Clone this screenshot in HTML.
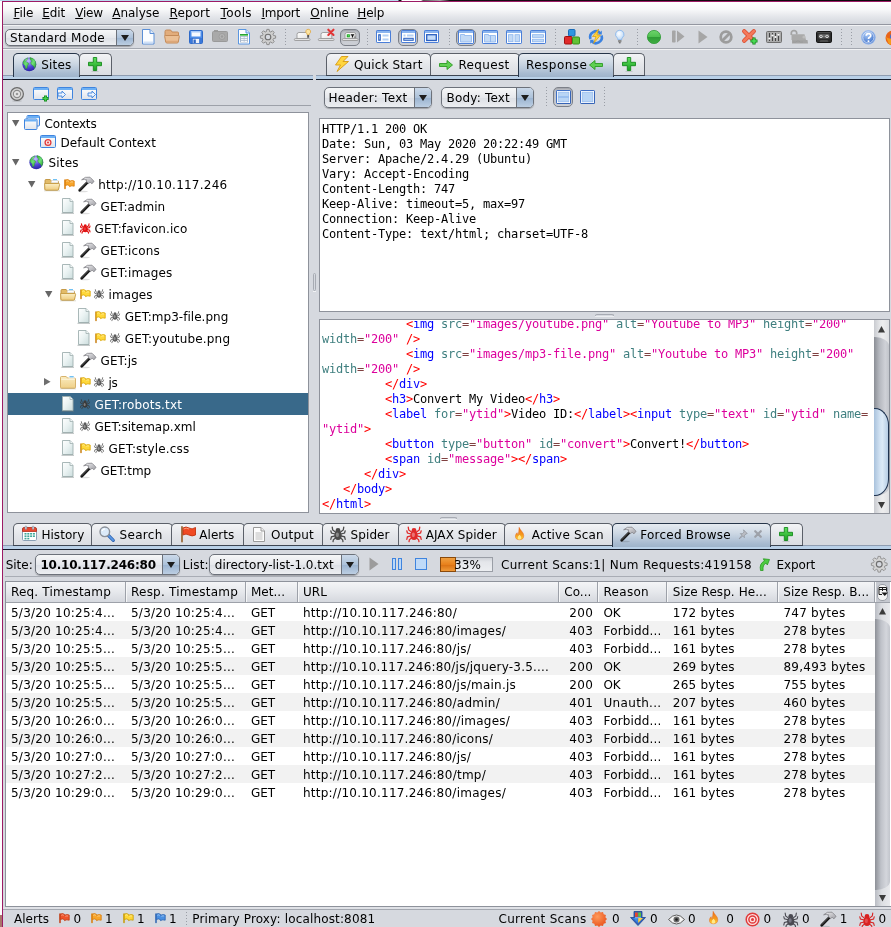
<!DOCTYPE html><html><head><meta charset="utf-8"><title>OWASP ZAP</title><style>html,body{margin:0;padding:0;}
body{width:891px;height:927px;overflow:hidden;background:#d6d9df;font-family:"DejaVu Sans","Liberation Sans",sans-serif;font-size:12px;color:#000;position:relative;}
.a{position:absolute;}
.t{position:absolute;white-space:pre;line-height:16px;height:16px;}
.mono{font-family:"DejaVu Sans Mono","Liberation Mono",monospace;font-size:12px;letter-spacing:-0.225px;white-space:pre;line-height:15px;}
svg{position:absolute;overflow:visible;}
.tab{position:absolute;box-sizing:border-box;border:1px solid #5b6069;border-bottom:none;border-radius:5px 5px 0 0;background:linear-gradient(#f3f4f6,#e4e6ea 50%,#d9dce2);height:23px;top:53px}
.tab:not(.sel):after{content:"";position:absolute;left:-1px;right:-1px;bottom:0;height:1px;background:#3d4552}
.tab.sel{border-color:#27364a;background:linear-gradient(#e6ebf1,#cdd8e4 40%,#a8bbd1 85%,#9fb4cb);height:24px}
.strip{position:absolute;height:5px;background:linear-gradient(#8f9db1 0 1px,#b9d0e7 1px 4px,#141c2b 4px 5px);}
.combo{position:absolute;box-sizing:border-box;border:1px solid #6c717a;border-radius:5px;background:linear-gradient(#f6f7f8,#e6e8ec 50%,#dcdfe5 51%,#eceef1);box-shadow:0 1px 1px rgba(0,0,0,.25);}
.combo .arr{position:absolute;right:0;top:0;bottom:0;width:16px;border-left:1px solid #6c717a;border-radius:0 4px 4px 0;background:linear-gradient(#cbd9e9,#adc2da 50%,#9ab3d0 51%,#bccee2);}
.combo .arr:after{content:"";position:absolute;left:4px;top:calc(50% - 3px);border:4px solid transparent;border-top:6px solid #1d1d1d;border-bottom:none;}
.sepv{position:absolute;width:1px;background:repeating-linear-gradient(#9a9ea6 0 1px,transparent 1px 3px);}
.tb{position:absolute;box-sizing:border-box;border:1px solid #7c8089;border-radius:5px;background:linear-gradient(#bfc2c9,#cdd0d6);box-shadow:inset 0 1px 2px rgba(0,0,0,.18)}
.panel{position:absolute;box-sizing:border-box;border:1px solid #8e929b;background:#fff;}
.mono i{font-style:normal}
.mono .r{color:#ff0000}.mono .b{color:#0000ff}.mono .at{color:#3f7f7f}.mono .op{color:#804040}.mono .s{color:#dc009c}
#w{position:absolute;left:0;top:0;width:891px;height:927px;will-change:transform;}
</style></head><body><div id="w">
<div class="a" style="left:0;top:0;width:2px;height:927px;background:#fff"></div>
<div class="a" style="left:0;top:915px;width:2px;height:12px;background:#a9756b"></div>
<div class="a" style="left:2px;top:0;width:1px;height:927px;background:#9c1b65"></div>
<div class="a" style="left:0;top:0;width:891px;height:1px;background:linear-gradient(90deg,#b9d9ee 0,#b9d9ee 398px,#111 399px,#111 401px,#fff 402px,#fff 421px,#555 423px,#aaa 440px,#111 450px,#1a0a14 60%,#0a0a0a)"></div>
<div class="a" style="left:2px;top:1px;width:889px;height:1px;background:#9c1b65"></div>
<div class="a" style="left:3px;top:2px;width:888px;height:22px;background:linear-gradient(#ffffff 0,#f7f8f9 35%,#e5e7eb 65%,#d8dbe1 90%,#d4d7dd)"></div>
<div class="a" style="left:3px;top:24px;width:888px;height:1px;background:#9396a0"></div>
<div class="t" style="left:13.5px;top:5px;letter-spacing:-0.095px;"><u>F</u>ile</div>
<div class="t" style="left:42.2px;top:5px;letter-spacing:-0.110px;"><u>E</u>dit</div>
<div class="t" style="left:75.2px;top:5px;letter-spacing:-0.219px;"><u>V</u>iew</div>
<div class="t" style="left:112.2px;top:5px;letter-spacing:-0.006px;"><u>A</u>nalyse</div>
<div class="t" style="left:169.5px;top:5px;letter-spacing:0.120px;"><u>R</u>eport</div>
<div class="t" style="left:220.5px;top:5px;letter-spacing:0.388px;"><u>T</u>ools</div>
<div class="t" style="left:261.5px;top:5px;letter-spacing:-0.221px;"><u>I</u>mport</div>
<div class="t" style="left:310.3px;top:5px;letter-spacing:-0.035px;"><u>O</u>nline</div>
<div class="t" style="left:357.3px;top:5px;letter-spacing:-0.089px;"><u>H</u>elp</div>
<div class="a" style="left:3px;top:48px;width:888px;height:1px;background:#a4a8b0"></div>
<div class="a" style="left:3px;top:49px;width:888px;height:1px;background:#f1f2f4"></div>
<div class="a" style="left:3px;top:25px;width:888px;height:1px;background:#f1f2f4"></div>
<div class="combo" style="left:5px;top:29px;width:129px;height:17px"><div class="arr"></div></div>
<div class="t" style="left:10px;top:30px;letter-spacing:0.300px;">Standard Mode</div>
<svg style="left:142px;top:29px" width="13" height="16" viewBox="0 0 13 16"><path d="M.5 .5h7.500l4 4v10.500h-11.500z" fill="#fbfdff" stroke="#5b8fd6" stroke-width="1"/><path d="M8 .5v4h4" fill="#dfeafa" stroke="#5b8fd6" stroke-width="1"/><path d="M1.500 13.500h9.500" stroke="#cfe0f7" stroke-width="2"/></svg>
<svg style="left:164px;top:29px" width="16" height="15" viewBox="0 0 16 15"><path d="M1 2.500q0-1.500 1.500-1.500h3.500q1 0 1.500 1l.5 1h5.500q1 0 1 1v3h-13.500z" fill="#e2ad7c" stroke="#c48a58" stroke-width="1"/>
<path d="M.700 7.500q-.3-1 .8-1h13q1.100 0 .8 1l-1 5.500q-.2 1-1.300 1h-10q-1.100 0-1.300-1z" fill="#ebbf94" stroke="#c48a58" stroke-width="1"/><path d="M2 12.300h12" stroke="#d9a272" stroke-width="1"/></svg>
<svg style="left:189px;top:30px" width="14" height="14" viewBox="0 0 14 14"><path d="M.5 1.500q0-1 1-1h11q1 0 1 1v11q0 1-1 1h-11q-1 0-1-1z" fill="#4d8ce8" stroke="#2f6ac8" stroke-width="1"/>
<rect x="2.500" y="1" width="9" height="5.500" fill="#f6f9ff"/><rect x="2.500" y="1" width="9" height="1.500" fill="#a9c9f7"/><path d="M1 8h12v5h-12z" fill="#3a78da"/>
<rect x="3.500" y="8.500" width="7" height="5" fill="#eef2fa" stroke="#2f6ac8" stroke-width=".6"/><rect x="4.500" y="9.500" width="2.300" height="3.500" fill="#2f66c4"/></svg>
<svg style="left:212px;top:30px" width="16" height="12" viewBox="0 0 16 12"><rect x="2" y="0" width="4" height="2" fill="#9d9d9d"/><rect x=".5" y="1.500" width="15" height="10" rx="1" fill="#a9a9a9" stroke="#9a9a9a"/>
<circle cx="10" cy="6.500" r="3" fill="#b5b5b5" stroke="#999" stroke-width=".8"/><circle cx="10" cy="6.500" r="1.200" fill="#9c9c9c"/></svg>
<svg style="left:238px;top:29px" width="12" height="16" viewBox="0 0 12 16"><path d="M.5 .5h7.500l3.500 3.500v11h-11z" fill="#fdfeff" stroke="#5b96e0" stroke-width="1"/><path d="M8 .5v3.500h3.500" fill="#dfeafa" stroke="#5b96e0" stroke-width="1"/>
<rect x="2" y="5" width="8" height="8.500" fill="#a9b9cd"/><rect x="2" y="5" width="8" height="1" fill="#2aa336"/><rect x="2" y="6" width="8" height="1" fill="#6fd26f"/>
<g fill="#fff"><rect x="3" y="7.800" width="2.800" height="1.100"/><rect x="6.400" y="7.800" width="2.800" height="1.100"/><rect x="3" y="9.800" width="2.800" height="1.100"/><rect x="6.400" y="9.800" width="2.800" height="1.100"/><rect x="3" y="11.800" width="2.800" height="1.100"/><rect x="6.400" y="11.800" width="2.800" height="1.100"/></g></svg>
<svg style="left:260px;top:29px" width="16" height="16" viewBox="0 0 16 16"><path d="M15.61 6.85L15.61 9.15L13.49 9.52L12.96 10.81L14.20 12.57L12.57 14.20L10.81 12.96L9.52 13.49L9.15 15.61L6.85 15.61L6.48 13.49L5.19 12.96L3.43 14.20L1.80 12.57L3.04 10.81L2.51 9.52L0.39 9.15L0.39 6.85L2.51 6.48L3.04 5.19L1.80 3.43L3.43 1.80L5.19 3.04L6.48 2.51L6.85 0.39L9.15 0.39L9.52 2.51L10.81 3.04L12.57 1.80L14.20 3.43L12.96 5.19L13.49 6.48z" fill="#cfcfcf" stroke="#868686" stroke-width=".9" stroke-linejoin="round"/><circle cx="8" cy="8" r="2.800" fill="#d6d9df" stroke="#6f6f6f" stroke-width="1.100"/></svg>
<div class="sepv" style="left:285px;top:29px;height:17px"></div>
<div class="sepv" style="left:367px;top:29px;height:17px"></div>
<div class="sepv" style="left:449px;top:29px;height:17px"></div>
<div class="sepv" style="left:555px;top:29px;height:17px"></div>
<div class="sepv" style="left:637px;top:29px;height:17px"></div>
<div class="sepv" style="left:841px;top:29px;height:17px"></div>
<div class="sepv" style="left:851px;top:29px;height:17px"></div>
<svg style="left:293.5px;top:29px" width="17" height="14" viewBox="0 0 17 14"><defs><linearGradient id="lp" x1="0" y1="0" x2="1" y2="1"><stop offset="0" stop-color="#ffffff"/><stop offset="1" stop-color="#e2e2e2"/></linearGradient></defs><path d="M3 9.700v-4.200q0-2 2-2h6.800q2 0 2 2v4.200z" fill="url(#lp)" stroke="#8e8e8e" stroke-width=".8"/><rect x=".4" y="9.700" width="15.600" height="1.800" rx=".7" fill="#f2f2f2" stroke="#8e8e8e" stroke-width=".8"/><path d="M14.200 0.300a2.300 2.300 0 0 1 1.400 4.200q-.5 .5-.5 1.500h-1.800q0-1-.5-1.500a2.300 2.300 0 0 1 1.400-4.200z" fill="#fbe3a0" stroke="#e0a030" stroke-width=".7"/><rect x="13.300" y="6" width="1.800" height="2.600" fill="#555"/></svg>
<svg style="left:317.5px;top:29px" width="17" height="14" viewBox="0 0 17 14"><defs><linearGradient id="lp" x1="0" y1="0" x2="1" y2="1"><stop offset="0" stop-color="#ffffff"/><stop offset="1" stop-color="#e2e2e2"/></linearGradient></defs><path d="M3 9.700v-4.200q0-2 2-2h6.800q2 0 2 2v4.200z" fill="url(#lp)" stroke="#8e8e8e" stroke-width=".8"/><rect x=".4" y="9.700" width="15.600" height="1.800" rx=".7" fill="#f2f2f2" stroke="#8e8e8e" stroke-width=".8"/><path d="M10.300 .7l5.200 5.200M15.500 .7l-5.200 5.200" stroke="#e23535" stroke-width="2.100" stroke-linecap="round"/></svg>
<div class="tb" style="left:340px;top:29px;width:20px;height:17px"></div>
<svg style="left:341.7px;top:29.2px" width="17" height="14" viewBox="0 0 17 14"><defs><linearGradient id="lp" x1="0" y1="0" x2="1" y2="1"><stop offset="0" stop-color="#ffffff"/><stop offset="1" stop-color="#e2e2e2"/></linearGradient></defs><path d="M3 9.700v-4.200q0-2 2-2h6.800q2 0 2 2v4.200z" fill="url(#lp)" stroke="#8e8e8e" stroke-width=".8"/><rect x=".4" y="9.700" width="15.600" height="1.800" rx=".7" fill="#f2f2f2" stroke="#8e8e8e" stroke-width=".8"/><rect x="4.800" y="5.300" width="3" height="3" fill="#17a81f"/><rect x="5.700" y="6.200" width="1.200" height="1.200" fill="#7be07b"/><path d="M8.800 5.800h3.400M10.500 5.800v2.800" stroke="#111" stroke-width="1.200"/><rect x="12.400" y="7.600" width="1" height="1" fill="#111"/></svg>
<svg style="left:376px;top:30px" width="15" height="13" viewBox="0 0 15 13"><rect x=".5" y=".5" width="14" height="12" rx=".6" fill="#ffffff" stroke="#4a7ed8" stroke-width="1"/><rect x="1" y="1" width="13" height="2" fill="#8ab4ee"/><rect x="2.700" y="4.700" width="1.600" height="5.600" fill="#c3daf6" stroke="#2a5fc0" stroke-width="1"/><rect x="6.500" y="4.500" width="6" height="2" fill="#b4d0f4"/><rect x="6.500" y="8.500" width="6" height="2" fill="#b4d0f4"/></svg>
<div class="tb" style="left:398px;top:29px;width:20px;height:17px"></div>
<svg style="left:400.5px;top:30px" width="15" height="13" viewBox="0 0 15 13"><rect x=".5" y=".5" width="14" height="12" rx=".6" fill="#ffffff" stroke="#4a7ed8" stroke-width="1"/><rect x="1" y="1" width="13" height="2" fill="#8ab4ee"/><rect x="2.500" y="4.500" width="2" height="2" fill="#b4d0f4"/><rect x="6" y="4.500" width="6.500" height="2" fill="#b4d0f4"/><rect x="2.800" y="8.300" width="9.400" height="2" fill="#c3daf6" stroke="#2a5fc0" stroke-width="1"/></svg>
<svg style="left:424px;top:30px" width="15" height="13" viewBox="0 0 15 13"><rect x=".5" y=".5" width="14" height="12" rx=".6" fill="#ffffff" stroke="#4a7ed8" stroke-width="1"/><rect x="1" y="1" width="13" height="2" fill="#8ab4ee"/><rect x="2.700" y="4.700" width="9.600" height="5.800" fill="#c5dcf8" stroke="#2a5fc0" stroke-width="1.300"/></svg>
<div class="tb" style="left:456px;top:29px;width:20px;height:17px"></div>
<svg style="left:458px;top:30px" width="16" height="14" viewBox="0 0 16 14"><rect x=".5" y=".5" width="15" height="13" rx=".6" fill="#ffffff" stroke="#4a7ed8" stroke-width="1"/><rect x="1" y="1" width="14" height="2" fill="#8ab4ee"/><path d="M2.500 12v-7.500h4v1h7v6.500z" fill="#c3daf6" stroke="#8ab4ee" stroke-width=".8"/></svg>
<svg style="left:482px;top:30px" width="16" height="14" viewBox="0 0 16 14"><rect x=".5" y=".5" width="15" height="13" rx=".6" fill="#ffffff" stroke="#4a7ed8" stroke-width="1"/><rect x="1" y="1" width="14" height="2" fill="#8ab4ee"/><path d="M2.500 12v-7.500h4v1h7v6.500z" fill="#c3daf6" stroke="#8ab4ee" stroke-width=".8"/><path d="M8.500 5.500v6.500" stroke="#8ab4ee" stroke-width=".9"/></svg>
<svg style="left:506px;top:30px" width="16" height="14" viewBox="0 0 16 14"><rect x=".5" y=".5" width="15" height="13" rx=".6" fill="#ffffff" stroke="#4a7ed8" stroke-width="1"/><rect x="1" y="1" width="14" height="2" fill="#8ab4ee"/><rect x="2.500" y="4.700" width="4.500" height="7" fill="#c3daf6" stroke="#8ab4ee" stroke-width=".8"/><rect x="9" y="4.700" width="4.500" height="7" fill="#c3daf6" stroke="#8ab4ee" stroke-width=".8"/></svg>
<svg style="left:530px;top:30px" width="16" height="14" viewBox="0 0 16 14"><rect x=".5" y=".5" width="15" height="13" rx=".6" fill="#ffffff" stroke="#4a7ed8" stroke-width="1"/><rect x="1" y="1" width="14" height="2" fill="#8ab4ee"/><rect x="2.500" y="4.700" width="11" height="2.600" fill="#c3daf6" stroke="#8ab4ee" stroke-width=".8"/><rect x="2.500" y="9.200" width="11" height="2.600" fill="#c3daf6" stroke="#8ab4ee" stroke-width=".8"/></svg>
<svg style="left:563.5px;top:28.7px" width="16" height="16" viewBox="0 0 16 16"><rect x="4.500" y=".5" width="6.500" height="6.500" rx="1" fill="#2f96e0" stroke="#1a6cb8"/><rect x=".5" y="7.500" width="7.500" height="7.500" rx="1" fill="#e02a2a" stroke="#a01010"/><rect x="8.500" y="8" width="7" height="7" rx="1" fill="#62c234" stroke="#3c8f1a"/></svg>
<svg style="left:588px;top:29px" width="16" height="16" viewBox="0 0 16 16"><path d="M2.500 10a5.800 5.800 0 0 1 10-5.500M13.500 6.500a5.800 5.800 0 0 1-10 5.500" fill="none" stroke="#3b82e0" stroke-width="2.600"/><path d="M13.800 1.500v4h-4zM2.200 14.800v-4h4z" fill="#3b82e0"/><path d="M10.500 0l-6 7.500h3.500l-2.500 7 7-8.500h-3.500z" fill="#ffd23c" stroke="#d49b10" stroke-width=".7" stroke-linejoin="round"/></svg>
<svg style="left:615.2px;top:29px" width="9.5" height="15.5" viewBox="0 0 11 16"><defs><radialGradient id="bg1" cx=".4" cy=".35" r=".7"><stop offset="0" stop-color="#fff"/><stop offset="1" stop-color="#b7d6f7"/></radialGradient></defs><path d="M5.500 .5a4.800 4.800 0 0 1 3 8.600q-.8 .8-.8 2.400h-4.400q0-1.600-.8-2.400a4.800 4.800 0 0 1 3-8.600z" fill="url(#bg1)" stroke="#7fb0ea" stroke-width=".9"/><rect x="3.500" y="11.800" width="4" height="2.600" rx=".6" fill="#8d8d8d"/><rect x="4.500" y="14.400" width="2" height="1.200" fill="#555"/></svg>
<svg style="left:647px;top:30px" width="14" height="14" viewBox="0 0 14 14"><defs><linearGradient id="grn" x1="0" y1="0" x2="0" y2="1"><stop offset="0" stop-color="#6fd46c"/><stop offset=".5" stop-color="#4fc050"/><stop offset=".52" stop-color="#2f9c36"/><stop offset="1" stop-color="#3fae44"/></linearGradient></defs><circle cx="7" cy="7" r="6.600" fill="url(#grn)" stroke="#2f9a35" stroke-width=".8"/></svg>
<svg style="left:672px;top:30.3px" width="13" height="13" viewBox="0 0 13 13"><rect x="0" y=".5" width="3.600" height="12" rx=".8" fill="#a6a6a6"/><path d="M5 0.500v12l7.500-6z" fill="#a6a6a6"/></svg>
<svg style="left:697.5px;top:29.7px" width="10" height="14" viewBox="0 0 10 14"><path d="M.5 .5v13l9-6.500z" fill="#a6a6a6"/></svg>
<svg style="left:719px;top:29.8px" width="14" height="14" viewBox="0 0 14 14"><circle cx="7" cy="7" r="5.300" fill="none" stroke="#9c9c9c" stroke-width="2.800"/><path d="M3.300 10.700l7.400-7.400" stroke="#9c9c9c" stroke-width="2.800"/></svg>
<svg style="left:742px;top:29.3px" width="17" height="16" viewBox="0 0 17 16"><path d="M2.200 2.200l9.600 9.600M11.800 2.200l-9.600 9.600" stroke="#d9482a" stroke-width="4.200" stroke-linecap="round"/><path d="M2.200 2.200l9.600 9.600M11.800 2.200l-9.600 9.600" stroke="#f4785a" stroke-width="2.800" stroke-linecap="round"/><path d="M12 8.500v7M8.500 12h7" stroke="#0f8a1a" stroke-width="3.200"/><path d="M12 9.300v5.400M9.300 12h5.400" stroke="#4fe05a" stroke-width="1.500"/></svg>
<svg style="left:766px;top:30.8px" width="16" height="12" viewBox="0 0 16 12"><rect x=".5" y=".5" width="15" height="11" rx="1" fill="#ababab" stroke="#6e6e6e"/><path d="M3.500 2v8M6.500 2v8M9.500 2v8M12.500 2v8" stroke="#454545" stroke-width="1"/><circle cx="3.500" cy="7.500" r="1.100" fill="#fff"/><circle cx="6.500" cy="4.500" r="1.100" fill="#fff"/><circle cx="9.500" cy="6" r="1.100" fill="#fff"/><circle cx="12.500" cy="3.700" r="1.100" fill="#fff"/></svg>
<svg style="left:790px;top:29.8px" width="18" height="14" viewBox="0 0 18 14"><path d="M1.300 5v-2q0-2.300 2.700-2.300t2.700 2.300v1.500" fill="none" stroke="#a3a3a3" stroke-width="1.700"/><path d="M1.500 4.200h13l1.500 5.800h-14.500z" fill="#aaaaaa"/><path d="M2 10h15.500l.5 3.500h-16z" fill="#a4a4a4"/><circle cx="14" cy="7" r="1.600" fill="#bdbdbd"/><path d="M3 12h3l1-1h2l1 1h3" stroke="#999" stroke-width=".8" fill="none"/></svg>
<svg style="left:816px;top:31px" width="16" height="12" viewBox="0 0 16 12"><rect x=".5" y=".5" width="15" height="11" rx="1.200" fill="#2c2c2c" stroke="#151515"/><rect x="1.500" y="1.200" width="13" height="1" fill="#555"/><rect x="2.500" y="3" width="11" height="4.600" rx="1" fill="#5c5c5c"/><circle cx="5" cy="5.300" r="1.600" fill="#f2f2f2"/><circle cx="11" cy="5.300" r="1.600" fill="#f2f2f2"/><circle cx="5" cy="5.300" r=".7" fill="#111"/><circle cx="11" cy="5.300" r=".7" fill="#111"/><rect x="6.800" y="4.600" width="2.400" height="1.400" fill="#777"/><path d="M3.500 11l1-2h7l1 2z" fill="#4c4c4c"/></svg>
<svg style="left:860.6px;top:29.7px" width="14.8" height="14.8" viewBox="0 0 15 15"><defs><radialGradient id="hg" cx=".4" cy=".3" r=".8"><stop offset="0" stop-color="#a9c8f5"/><stop offset="1" stop-color="#2a62c4"/></radialGradient></defs><circle cx="7.500" cy="7.500" r="7" fill="url(#hg)" stroke="#9dbdf0" stroke-width=".8"/><circle cx="7.500" cy="7.500" r="5.700" fill="none" stroke="#fff" stroke-width=".8" opacity=".85"/><path d="M5.300 5.800q0-2.200 2.300-2.200t2.300 2q0 1.200-1.200 1.800t-1.100 1.700" fill="none" stroke="#fff" stroke-width="1.700"/><circle cx="7.600" cy="11.400" r="1" fill="#fff"/></svg>
<svg style="left:884.5px;top:29.5px" width="16" height="16" viewBox="0 0 16 16"><circle cx="8" cy="8" r="7.500" fill="#e8641a"/><circle cx="9" cy="7" r="4" fill="#3d6fd0"/><path d="M.8 6q2 3 4 2.500t3 3.500-4 2z" fill="#f59a1c"/></svg>
<div class="strip" style="left:3px;top:75px;width:310px"></div>
<div class="tab sel" style="left:13px;width:67px"></div>
<svg style="left:21.6px;top:56.5px" width="14.6" height="14.6" viewBox="0 0 15 15"><defs><radialGradient id="gg" cx=".45" cy=".28" r=".75"><stop offset="0" stop-color="#b9b2ff"/><stop offset=".55" stop-color="#5148d6"/><stop offset="1" stop-color="#2a22a2"/></radialGradient>
<linearGradient id="gl" x1="0" y1="0" x2="1" y2="1"><stop offset="0" stop-color="#2fae2a"/><stop offset=".5" stop-color="#6fe07a"/><stop offset="1" stop-color="#2aa228"/></linearGradient></defs>
<circle cx="7.500" cy="7.500" r="7.100" fill="url(#gg)"/>
<path d="M1.100 5q1.300-3 4.900-4.300l-.4 1.800-2 2 1.600 .8 2 1.600-1.400 1.600-.6 3-1.500 .6-.5-3-1.400-1.400q-1-1.200-.7-2.700z" fill="url(#gl)" stroke="#23901f" stroke-width=".35"/>
<path d="M8.200 .5q4 .4 5.700 4.200 1.200 3.600-.8 6.900l-1.100-2.100-2-1.500-1.200-2 1.300-1.600-1.600-1.500z" fill="url(#gl)" stroke="#23901f" stroke-width=".35"/>
<ellipse cx="6" cy="3.300" rx="3" ry="1.700" fill="#fff" opacity=".18"/></svg>
<div class="t" style="left:41.2px;top:57px;letter-spacing:0.202px;">Sites</div>
<div class="tab" style="left:79px;width:33px"></div>
<svg style="left:88px;top:57px" width="14" height="14" viewBox="0 0 14 14"><defs><linearGradient id="pg" x1="0" y1="0" x2="0" y2="1"><stop offset="0" stop-color="#63e060"/><stop offset="1" stop-color="#17a01f"/></linearGradient></defs>
<path d="M5.300 .5h3.400v4.800h4.800v3.400h-4.800v4.800h-3.400v-4.800h-4.800v-3.400h4.800z" fill="url(#pg)" stroke="#158a1c" stroke-width=".9" stroke-linejoin="round"/><ellipse cx="7" cy="14.300" rx="4" ry=".6" fill="#000" opacity=".15"/></svg>
<svg style="left:10px;top:87px" width="14" height="14" viewBox="0 0 14 14"><circle cx="7" cy="7" r="6.400" fill="#d4d4d4" stroke="#6a6a6a" stroke-width="1.200"/><circle cx="7" cy="7" r="3.600" fill="#e6e6e6" stroke="#8a8a8a" stroke-width="1.100"/><circle cx="7" cy="7" r="1.300" fill="#9a9a9a"/><ellipse cx="7" cy="14" rx="5" ry=".7" fill="#000" opacity=".15"/></svg>
<svg style="left:33px;top:87px" width="17" height="15" viewBox="0 0 17 15"><defs><linearGradient id="wb" x1="0" y1="0" x2="0" y2="1"><stop offset="0" stop-color="#fff"/><stop offset="1" stop-color="#dfe3ea"/></linearGradient></defs><rect x=".5" y=".5" width="15" height="12" rx="1" fill="url(#wb)" stroke="#3f84de" stroke-width="1"/><rect x="1" y="1" width="14" height="2" fill="#6cb0f5"/><path d="M12.500 8.500v6M9.500 11.500h6" stroke="#128a1c" stroke-width="3"/><path d="M12.500 9.300v4.400M10.300 11.500h4.400" stroke="#44d050" stroke-width="1.400"/></svg>
<svg style="left:57px;top:87px" width="16" height="13" viewBox="0 0 16 13"><defs><linearGradient id="wb" x1="0" y1="0" x2="0" y2="1"><stop offset="0" stop-color="#fff"/><stop offset="1" stop-color="#dfe3ea"/></linearGradient></defs><rect x=".5" y=".5" width="15" height="12" rx="1" fill="url(#wb)" stroke="#3f84de" stroke-width="1"/><rect x="1" y="1" width="14" height="2" fill="#6cb0f5"/><path d="M1 6h4v-2l3.500 3.500-3.500 3.500v-2h-4z" fill="#eaf2fd" stroke="#3f84de" stroke-width=".9" stroke-linejoin="round"/></svg>
<svg style="left:81px;top:87px" width="16" height="13" viewBox="0 0 16 13"><defs><linearGradient id="wb" x1="0" y1="0" x2="0" y2="1"><stop offset="0" stop-color="#fff"/><stop offset="1" stop-color="#dfe3ea"/></linearGradient></defs><rect x=".5" y=".5" width="15" height="12" rx="1" fill="url(#wb)" stroke="#3f84de" stroke-width="1"/><rect x="1" y="1" width="14" height="2" fill="#6cb0f5"/><path d="M7 6h4v-2l3.500 3.500-3.500 3.500v-2h-4z" fill="#eaf2fd" stroke="#3f84de" stroke-width=".9" stroke-linejoin="round"/></svg>
<div class="a" style="left:5px;top:105px;width:306px;height:1px;background:#9da1a9"></div>
<div class="panel" style="left:7px;top:112px;width:302px;height:401px"></div>
<div class="a" style="left:8px;top:393px;width:300px;height:22px;background:#39698a"></div>
<div class="t" style="left:44.5px;top:116px;letter-spacing:-0.158px;">Contexts</div>
<div class="t" style="left:60.5px;top:135px;letter-spacing:0.055px;">Default Context</div>
<div class="t" style="left:48.5px;top:155px;letter-spacing:0.202px;">Sites</div>
<div class="t" style="left:98.2px;top:177px;letter-spacing:0.232px;">http://10.10.117.246</div>
<div class="t" style="left:100.6px;top:199px;letter-spacing:0.007px;">GET:admin</div>
<div class="t" style="left:94.5px;top:221px;letter-spacing:0.094px;">GET:favicon.ico</div>
<div class="t" style="left:100.6px;top:243px;letter-spacing:0.137px;">GET:icons</div>
<div class="t" style="left:100.6px;top:265px;letter-spacing:0.124px;">GET:images</div>
<div class="t" style="left:108.5px;top:287px;letter-spacing:0.095px;">images</div>
<div class="t" style="left:124.7px;top:309px;letter-spacing:0.035px;">GET:mp3-file.png</div>
<div class="t" style="left:124.7px;top:331px;letter-spacing:0.170px;">GET:youtube.png</div>
<div class="t" style="left:100.6px;top:353px;letter-spacing:0.030px;">GET:js</div>
<div class="t" style="left:108.5px;top:375px;letter-spacing:-0.293px;">js</div>
<div class="t" style="left:94.5px;top:397px;letter-spacing:0.172px;color:#fff;">GET:robots.txt</div>
<div class="t" style="left:94.5px;top:419px;letter-spacing:0.006px;">GET:sitemap.xml</div>
<div class="t" style="left:108.5px;top:441px;letter-spacing:0.167px;">GET:style.css</div>
<div class="t" style="left:100.6px;top:463px;letter-spacing:-0.050px;">GET:tmp</div>
<svg style="left:12px;top:120px" width="8" height="7" viewBox="0 0 8 7"><path d="M0 0h7.4L3.7 6.6z" fill="#666666"/></svg>
<svg style="left:12px;top:159px" width="8" height="7" viewBox="0 0 8 7"><path d="M0 0h7.4L3.7 6.6z" fill="#666666"/></svg>
<svg style="left:28px;top:181px" width="8" height="7" viewBox="0 0 8 7"><path d="M0 0h7.4L3.7 6.6z" fill="#666666"/></svg>
<svg style="left:45px;top:291px" width="8" height="7" viewBox="0 0 8 7"><path d="M0 0h7.4L3.7 6.6z" fill="#666666"/></svg>
<svg style="left:44px;top:378px" width="7" height="8" viewBox="0 0 7 8"><path d="M0 0v7.4L6.6 3.7z" fill="#6e6e6e"/></svg>
<svg style="left:24px;top:115px" width="16" height="15" viewBox="0 0 16 15"><defs><linearGradient id="wb" x1="0" y1="0" x2="0" y2="1"><stop offset="0" stop-color="#fff"/><stop offset="1" stop-color="#dfe3ea"/></linearGradient></defs><rect x="3" y="0.5" width="12.500" height="10.500" rx="1" fill="url(#wb)" stroke="#3f84de" stroke-width="1"/><rect x="3.5" y="1" width="11.500" height="2" fill="#6cb0f5"/><rect x="0.5" y="4" width="12.500" height="10.500" rx="1" fill="url(#wb)" stroke="#3f84de" stroke-width="1"/><rect x="1" y="4.5" width="11.500" height="2" fill="#6cb0f5"/></svg>
<svg style="left:40px;top:135px" width="16" height="13" viewBox="0 0 16 13"><defs><linearGradient id="wb" x1="0" y1="0" x2="0" y2="1"><stop offset="0" stop-color="#fff"/><stop offset="1" stop-color="#dfe3ea"/></linearGradient></defs><rect x=".5" y=".5" width="15" height="12" rx="1" fill="url(#wb)" stroke="#3f84de" stroke-width="1"/><rect x="1" y="1" width="14" height="2" fill="#6cb0f5"/><circle cx="8" cy="7.500" r="2.900" fill="#fbe3e3" stroke="#e23a3a" stroke-width="1.300"/><circle cx="8" cy="7.500" r="1" fill="#e23a3a"/></svg>
<svg style="left:28.6px;top:154.8px" width="14.6" height="14.6" viewBox="0 0 15 15"><defs><radialGradient id="gg" cx=".45" cy=".28" r=".75"><stop offset="0" stop-color="#b9b2ff"/><stop offset=".55" stop-color="#5148d6"/><stop offset="1" stop-color="#2a22a2"/></radialGradient>
<linearGradient id="gl" x1="0" y1="0" x2="1" y2="1"><stop offset="0" stop-color="#2fae2a"/><stop offset=".5" stop-color="#6fe07a"/><stop offset="1" stop-color="#2aa228"/></linearGradient></defs>
<circle cx="7.500" cy="7.500" r="7.100" fill="url(#gg)"/>
<path d="M1.100 5q1.300-3 4.900-4.300l-.4 1.800-2 2 1.600 .8 2 1.600-1.400 1.600-.6 3-1.500 .6-.5-3-1.400-1.400q-1-1.200-.7-2.700z" fill="url(#gl)" stroke="#23901f" stroke-width=".35"/>
<path d="M8.200 .5q4 .4 5.700 4.200 1.200 3.600-.8 6.900l-1.100-2.100-2-1.500-1.200-2 1.300-1.600-1.600-1.500z" fill="url(#gl)" stroke="#23901f" stroke-width=".35"/>
<ellipse cx="6" cy="3.300" rx="3" ry="1.700" fill="#fff" opacity=".18"/></svg>
<svg style="left:44px;top:177px" width="16" height="14" viewBox="0 0 16 14"><defs><linearGradient id="fo" x1="0" y1="0" x2="0" y2="1"><stop offset="0" stop-color="#fbeec4"/><stop offset="1" stop-color="#eecb7c"/></linearGradient></defs>
<path d="M1 3.500q0-1 1-1h4.200l1.300 1.500h6q1 0 1 1v7.500h-13.500z" fill="#e2bb68" stroke="#c0923c" stroke-width=".9"/>
<rect x="9" y="2.200" width="4" height="1.600" fill="#4fb2f0"/><rect x="7.500" y="3.300" width="6.500" height="2.500" fill="#fdfdfd" stroke="#d0d0d0" stroke-width=".4"/>
<path d="M.6 6.500h14.200q1 0 .8 1l-1 4.800q-.2 .9-1.200 .9h-11.400q-1 0-1.100-.9z" fill="url(#fo)" stroke="#c49a42" stroke-width=".9"/>
<rect x="0" y="13.300" width="16" height="1" fill="#7a6a40" opacity=".25"/></svg>
<svg style="left:64px;top:179px" width="11" height="10" viewBox="0 0 11 10"><path d="M1 1v8.600" stroke="#d97a05" stroke-width="1.500" stroke-linecap="round"/>
<path d="M1.300 1.200q2.200-1.400 4.200 .2v.9q2.300-1.300 4.700-.3v5.200q-2.400-1-4.700 .4v-.9q-2-1.500-4.200-.2z" fill="#f7a52a" stroke="#d97a05" stroke-width=".8" stroke-linejoin="round"/>
<path d="M2.300 2.300q1.300-.8 2.500 0M6.400 3.300q1.400-.7 2.800-.3" stroke="#fff" stroke-opacity=".55" stroke-width=".8" fill="none"/></svg>
<svg style="left:78px;top:176px" width="16" height="16" viewBox="0 0 16 16"><defs><linearGradient id="hm" x1="0" y1="0" x2="1" y2="1"><stop offset="0" stop-color="#f4f4f6"/><stop offset="1" stop-color="#9d9da3"/></linearGradient></defs>
<ellipse cx="5" cy="15.500" rx="5" ry=".7" fill="#000" opacity=".13"/>
<path d="M1.700 14.300l8-8.200" stroke="#151515" stroke-width="2.700" stroke-linecap="round"/>
<path d="M1.900 13.500l7.200-7.400" stroke="#6e6e6e" stroke-width=".7" stroke-linecap="round"/>
<path d="M3.600 3.800q3.300-3.600 8.400-2.600l3.600 3.600q.6 .8-.1 1.400l-1.300 1.200q-.7 .4-1.200-.2l-.9-1-1.500 1.500-2.700-2.700 1-1.100q-2.400-1-5.300-.1z" fill="url(#hm)" stroke="#77777d" stroke-width=".7" stroke-linejoin="round"/></svg>
<svg style="left:62px;top:198px" width="12" height="16" viewBox="0 0 12 16"><defs><linearGradient id="dg" x1="0" y1="0" x2="1" y2="1"><stop offset="0" stop-color="#ffffff"/><stop offset=".5" stop-color="#e9f2f2"/><stop offset="1" stop-color="#cbdcdc"/></linearGradient></defs>
<path d="M.5 .5h7.500l3 3v11h-10.500z" fill="url(#dg)" stroke="#9fb0b0" stroke-width=".9"/><path d="M8 .5v3h3" fill="#f4f9f9" stroke="#9fb0b0" stroke-width=".8"/><rect x="-.5" y="14.800" width="12.500" height="1.100" fill="#6f7c7c" opacity=".45"/></svg>
<svg style="left:62px;top:220px" width="12" height="16" viewBox="0 0 12 16"><defs><linearGradient id="dg" x1="0" y1="0" x2="1" y2="1"><stop offset="0" stop-color="#ffffff"/><stop offset=".5" stop-color="#e9f2f2"/><stop offset="1" stop-color="#cbdcdc"/></linearGradient></defs>
<path d="M.5 .5h7.500l3 3v11h-10.500z" fill="url(#dg)" stroke="#9fb0b0" stroke-width=".9"/><path d="M8 .5v3h3" fill="#f4f9f9" stroke="#9fb0b0" stroke-width=".8"/><rect x="-.5" y="14.800" width="12.500" height="1.100" fill="#6f7c7c" opacity=".45"/></svg>
<svg style="left:62px;top:242px" width="12" height="16" viewBox="0 0 12 16"><defs><linearGradient id="dg" x1="0" y1="0" x2="1" y2="1"><stop offset="0" stop-color="#ffffff"/><stop offset=".5" stop-color="#e9f2f2"/><stop offset="1" stop-color="#cbdcdc"/></linearGradient></defs>
<path d="M.5 .5h7.500l3 3v11h-10.500z" fill="url(#dg)" stroke="#9fb0b0" stroke-width=".9"/><path d="M8 .5v3h3" fill="#f4f9f9" stroke="#9fb0b0" stroke-width=".8"/><rect x="-.5" y="14.800" width="12.500" height="1.100" fill="#6f7c7c" opacity=".45"/></svg>
<svg style="left:62px;top:264px" width="12" height="16" viewBox="0 0 12 16"><defs><linearGradient id="dg" x1="0" y1="0" x2="1" y2="1"><stop offset="0" stop-color="#ffffff"/><stop offset=".5" stop-color="#e9f2f2"/><stop offset="1" stop-color="#cbdcdc"/></linearGradient></defs>
<path d="M.5 .5h7.500l3 3v11h-10.500z" fill="url(#dg)" stroke="#9fb0b0" stroke-width=".9"/><path d="M8 .5v3h3" fill="#f4f9f9" stroke="#9fb0b0" stroke-width=".8"/><rect x="-.5" y="14.800" width="12.500" height="1.100" fill="#6f7c7c" opacity=".45"/></svg>
<svg style="left:62px;top:352px" width="12" height="16" viewBox="0 0 12 16"><defs><linearGradient id="dg" x1="0" y1="0" x2="1" y2="1"><stop offset="0" stop-color="#ffffff"/><stop offset=".5" stop-color="#e9f2f2"/><stop offset="1" stop-color="#cbdcdc"/></linearGradient></defs>
<path d="M.5 .5h7.500l3 3v11h-10.500z" fill="url(#dg)" stroke="#9fb0b0" stroke-width=".9"/><path d="M8 .5v3h3" fill="#f4f9f9" stroke="#9fb0b0" stroke-width=".8"/><rect x="-.5" y="14.800" width="12.500" height="1.100" fill="#6f7c7c" opacity=".45"/></svg>
<svg style="left:62px;top:396px" width="12" height="16" viewBox="0 0 12 16"><defs><linearGradient id="dg" x1="0" y1="0" x2="1" y2="1"><stop offset="0" stop-color="#ffffff"/><stop offset=".5" stop-color="#e9f2f2"/><stop offset="1" stop-color="#cbdcdc"/></linearGradient></defs>
<path d="M.5 .5h7.500l3 3v11h-10.500z" fill="url(#dg)" stroke="#9fb0b0" stroke-width=".9"/><path d="M8 .5v3h3" fill="#f4f9f9" stroke="#9fb0b0" stroke-width=".8"/><rect x="-.5" y="14.800" width="12.500" height="1.100" fill="#6f7c7c" opacity=".45"/></svg>
<svg style="left:62px;top:418px" width="12" height="16" viewBox="0 0 12 16"><defs><linearGradient id="dg" x1="0" y1="0" x2="1" y2="1"><stop offset="0" stop-color="#ffffff"/><stop offset=".5" stop-color="#e9f2f2"/><stop offset="1" stop-color="#cbdcdc"/></linearGradient></defs>
<path d="M.5 .5h7.500l3 3v11h-10.500z" fill="url(#dg)" stroke="#9fb0b0" stroke-width=".9"/><path d="M8 .5v3h3" fill="#f4f9f9" stroke="#9fb0b0" stroke-width=".8"/><rect x="-.5" y="14.800" width="12.500" height="1.100" fill="#6f7c7c" opacity=".45"/></svg>
<svg style="left:62px;top:440px" width="12" height="16" viewBox="0 0 12 16"><defs><linearGradient id="dg" x1="0" y1="0" x2="1" y2="1"><stop offset="0" stop-color="#ffffff"/><stop offset=".5" stop-color="#e9f2f2"/><stop offset="1" stop-color="#cbdcdc"/></linearGradient></defs>
<path d="M.5 .5h7.500l3 3v11h-10.500z" fill="url(#dg)" stroke="#9fb0b0" stroke-width=".9"/><path d="M8 .5v3h3" fill="#f4f9f9" stroke="#9fb0b0" stroke-width=".8"/><rect x="-.5" y="14.800" width="12.500" height="1.100" fill="#6f7c7c" opacity=".45"/></svg>
<svg style="left:62px;top:462px" width="12" height="16" viewBox="0 0 12 16"><defs><linearGradient id="dg" x1="0" y1="0" x2="1" y2="1"><stop offset="0" stop-color="#ffffff"/><stop offset=".5" stop-color="#e9f2f2"/><stop offset="1" stop-color="#cbdcdc"/></linearGradient></defs>
<path d="M.5 .5h7.500l3 3v11h-10.500z" fill="url(#dg)" stroke="#9fb0b0" stroke-width=".9"/><path d="M8 .5v3h3" fill="#f4f9f9" stroke="#9fb0b0" stroke-width=".8"/><rect x="-.5" y="14.800" width="12.500" height="1.100" fill="#6f7c7c" opacity=".45"/></svg>
<svg style="left:78px;top:308px" width="12" height="16" viewBox="0 0 12 16"><defs><linearGradient id="dg" x1="0" y1="0" x2="1" y2="1"><stop offset="0" stop-color="#ffffff"/><stop offset=".5" stop-color="#e9f2f2"/><stop offset="1" stop-color="#cbdcdc"/></linearGradient></defs>
<path d="M.5 .5h7.500l3 3v11h-10.500z" fill="url(#dg)" stroke="#9fb0b0" stroke-width=".9"/><path d="M8 .5v3h3" fill="#f4f9f9" stroke="#9fb0b0" stroke-width=".8"/><rect x="-.5" y="14.800" width="12.500" height="1.100" fill="#6f7c7c" opacity=".45"/></svg>
<svg style="left:78px;top:330px" width="12" height="16" viewBox="0 0 12 16"><defs><linearGradient id="dg" x1="0" y1="0" x2="1" y2="1"><stop offset="0" stop-color="#ffffff"/><stop offset=".5" stop-color="#e9f2f2"/><stop offset="1" stop-color="#cbdcdc"/></linearGradient></defs>
<path d="M.5 .5h7.500l3 3v11h-10.500z" fill="url(#dg)" stroke="#9fb0b0" stroke-width=".9"/><path d="M8 .5v3h3" fill="#f4f9f9" stroke="#9fb0b0" stroke-width=".8"/><rect x="-.5" y="14.800" width="12.500" height="1.100" fill="#6f7c7c" opacity=".45"/></svg>
<svg style="left:80px;top:198px" width="16" height="16" viewBox="0 0 16 16"><defs><linearGradient id="hm" x1="0" y1="0" x2="1" y2="1"><stop offset="0" stop-color="#f4f4f6"/><stop offset="1" stop-color="#9d9da3"/></linearGradient></defs>
<ellipse cx="5" cy="15.500" rx="5" ry=".7" fill="#000" opacity=".13"/>
<path d="M1.700 14.300l8-8.200" stroke="#151515" stroke-width="2.700" stroke-linecap="round"/>
<path d="M1.900 13.500l7.200-7.400" stroke="#6e6e6e" stroke-width=".7" stroke-linecap="round"/>
<path d="M3.600 3.800q3.300-3.600 8.400-2.600l3.600 3.600q.6 .8-.1 1.400l-1.300 1.200q-.7 .4-1.200-.2l-.9-1-1.500 1.500-2.700-2.700 1-1.100q-2.400-1-5.300-.1z" fill="url(#hm)" stroke="#77777d" stroke-width=".7" stroke-linejoin="round"/></svg>
<svg style="left:80px;top:242px" width="16" height="16" viewBox="0 0 16 16"><defs><linearGradient id="hm" x1="0" y1="0" x2="1" y2="1"><stop offset="0" stop-color="#f4f4f6"/><stop offset="1" stop-color="#9d9da3"/></linearGradient></defs>
<ellipse cx="5" cy="15.500" rx="5" ry=".7" fill="#000" opacity=".13"/>
<path d="M1.700 14.300l8-8.200" stroke="#151515" stroke-width="2.700" stroke-linecap="round"/>
<path d="M1.900 13.500l7.200-7.400" stroke="#6e6e6e" stroke-width=".7" stroke-linecap="round"/>
<path d="M3.600 3.800q3.300-3.600 8.400-2.600l3.600 3.600q.6 .8-.1 1.400l-1.300 1.200q-.7 .4-1.200-.2l-.9-1-1.500 1.500-2.700-2.700 1-1.100q-2.400-1-5.300-.1z" fill="url(#hm)" stroke="#77777d" stroke-width=".7" stroke-linejoin="round"/></svg>
<svg style="left:80px;top:264px" width="16" height="16" viewBox="0 0 16 16"><defs><linearGradient id="hm" x1="0" y1="0" x2="1" y2="1"><stop offset="0" stop-color="#f4f4f6"/><stop offset="1" stop-color="#9d9da3"/></linearGradient></defs>
<ellipse cx="5" cy="15.500" rx="5" ry=".7" fill="#000" opacity=".13"/>
<path d="M1.700 14.300l8-8.200" stroke="#151515" stroke-width="2.700" stroke-linecap="round"/>
<path d="M1.900 13.500l7.200-7.400" stroke="#6e6e6e" stroke-width=".7" stroke-linecap="round"/>
<path d="M3.600 3.800q3.300-3.600 8.400-2.600l3.600 3.600q.6 .8-.1 1.400l-1.300 1.200q-.7 .4-1.200-.2l-.9-1-1.500 1.500-2.700-2.700 1-1.100q-2.400-1-5.300-.1z" fill="url(#hm)" stroke="#77777d" stroke-width=".7" stroke-linejoin="round"/></svg>
<svg style="left:80px;top:352px" width="16" height="16" viewBox="0 0 16 16"><defs><linearGradient id="hm" x1="0" y1="0" x2="1" y2="1"><stop offset="0" stop-color="#f4f4f6"/><stop offset="1" stop-color="#9d9da3"/></linearGradient></defs>
<ellipse cx="5" cy="15.500" rx="5" ry=".7" fill="#000" opacity=".13"/>
<path d="M1.700 14.300l8-8.200" stroke="#151515" stroke-width="2.700" stroke-linecap="round"/>
<path d="M1.900 13.500l7.200-7.400" stroke="#6e6e6e" stroke-width=".7" stroke-linecap="round"/>
<path d="M3.600 3.800q3.300-3.600 8.400-2.600l3.600 3.600q.6 .8-.1 1.400l-1.300 1.200q-.7 .4-1.200-.2l-.9-1-1.500 1.500-2.700-2.700 1-1.100q-2.400-1-5.300-.1z" fill="url(#hm)" stroke="#77777d" stroke-width=".7" stroke-linejoin="round"/></svg>
<svg style="left:80px;top:462px" width="16" height="16" viewBox="0 0 16 16"><defs><linearGradient id="hm" x1="0" y1="0" x2="1" y2="1"><stop offset="0" stop-color="#f4f4f6"/><stop offset="1" stop-color="#9d9da3"/></linearGradient></defs>
<ellipse cx="5" cy="15.500" rx="5" ry=".7" fill="#000" opacity=".13"/>
<path d="M1.700 14.300l8-8.200" stroke="#151515" stroke-width="2.700" stroke-linecap="round"/>
<path d="M1.900 13.500l7.200-7.400" stroke="#6e6e6e" stroke-width=".7" stroke-linecap="round"/>
<path d="M3.600 3.800q3.300-3.600 8.400-2.600l3.600 3.600q.6 .8-.1 1.400l-1.300 1.200q-.7 .4-1.200-.2l-.9-1-1.500 1.500-2.700-2.700 1-1.100q-2.400-1-5.300-.1z" fill="url(#hm)" stroke="#77777d" stroke-width=".7" stroke-linejoin="round"/></svg>
<svg style="left:80px;top:223px" width="10.5" height="10.5" viewBox="0 0 10 10"><g stroke="#e01212" stroke-width="1.1" fill="none" stroke-linecap="round">
<path d="M3.400 3.800L1.700 2.500 1.400 .7M6.600 3.800l1.700-1.300 .3-1.800"/>
<path d="M3.200 5L.9 4.400.5 3M6.800 5l2.300-.6 .4-1.400"/>
<path d="M3.200 6.200L.9 6.800.5 8.400M6.800 6.200l2.300 .6 .4 1.600"/>
<path d="M3.600 7.400L2.100 8.600 1.900 9.700M6.400 7.400L7.900 8.600 8.100 9.700"/></g>
<ellipse cx="5" cy="6" rx="2.300" ry="2.800" fill="#e01212"/><circle cx="5" cy="2.800" r="1.500" fill="#e01212"/><ellipse cx="4.600" cy="5.500" rx="1" ry="1.500" fill="#ff8a8a" opacity=".35"/></svg>
<svg style="left:60px;top:287px" width="16" height="14" viewBox="0 0 16 14"><defs><linearGradient id="fo" x1="0" y1="0" x2="0" y2="1"><stop offset="0" stop-color="#fbeec4"/><stop offset="1" stop-color="#eecb7c"/></linearGradient></defs>
<path d="M1 3.500q0-1 1-1h4.200l1.300 1.500h6q1 0 1 1v7.500h-13.500z" fill="#e2bb68" stroke="#c0923c" stroke-width=".9"/>
<rect x="9" y="2.200" width="4" height="1.600" fill="#4fb2f0"/><rect x="7.500" y="3.300" width="6.500" height="2.500" fill="#fdfdfd" stroke="#d0d0d0" stroke-width=".4"/>
<path d="M.6 6.500h14.200q1 0 .8 1l-1 4.800q-.2 .9-1.200 .9h-11.400q-1 0-1.100-.9z" fill="url(#fo)" stroke="#c49a42" stroke-width=".9"/>
<rect x="0" y="13.300" width="16" height="1" fill="#7a6a40" opacity=".25"/></svg>
<svg style="left:80px;top:289px" width="11" height="10" viewBox="0 0 11 10"><path d="M1 1v8.600" stroke="#c97f10" stroke-width="1.500" stroke-linecap="round"/>
<path d="M1.300 1.200q2.200-1.400 4.200 .2v.9q2.300-1.300 4.700-.3v5.200q-2.400-1-4.700 .4v-.9q-2-1.500-4.200-.2z" fill="#ffd83a" stroke="#d9a400" stroke-width=".8" stroke-linejoin="round"/>
<path d="M2.300 2.300q1.300-.8 2.500 0M6.400 3.300q1.400-.7 2.800-.3" stroke="#fff" stroke-opacity=".55" stroke-width=".8" fill="none"/></svg>
<svg style="left:94px;top:289px" width="10" height="10" viewBox="0 0 10 10"><g stroke="#5c5c5c" stroke-width="0.8" fill="none" stroke-linecap="round">
<path d="M3.400 3.800L1.700 2.500 1.400 .7M6.600 3.800l1.700-1.300 .3-1.800"/>
<path d="M3.200 5L.9 4.400.5 3M6.800 5l2.300-.6 .4-1.400"/>
<path d="M3.200 6.200L.9 6.800.5 8.400M6.800 6.200l2.300 .6 .4 1.600"/>
<path d="M3.600 7.400L2.100 8.600 1.900 9.700M6.400 7.400L7.900 8.600 8.100 9.700"/></g>
<ellipse cx="5" cy="6" rx="2.300" ry="2.800" fill="#5c5c5c"/><circle cx="5" cy="2.800" r="1.500" fill="#5c5c5c"/><ellipse cx="4.600" cy="5.500" rx="1" ry="1.500" fill="#ffffff" opacity=".35"/></svg>
<svg style="left:95px;top:311px" width="11" height="10" viewBox="0 0 11 10"><path d="M1 1v8.600" stroke="#c97f10" stroke-width="1.500" stroke-linecap="round"/>
<path d="M1.300 1.200q2.200-1.400 4.200 .2v.9q2.300-1.300 4.700-.3v5.200q-2.400-1-4.700 .4v-.9q-2-1.500-4.200-.2z" fill="#ffd83a" stroke="#d9a400" stroke-width=".8" stroke-linejoin="round"/>
<path d="M2.300 2.300q1.300-.8 2.500 0M6.400 3.300q1.400-.7 2.800-.3" stroke="#fff" stroke-opacity=".55" stroke-width=".8" fill="none"/></svg>
<svg style="left:110px;top:311px" width="10" height="10" viewBox="0 0 10 10"><g stroke="#5c5c5c" stroke-width="0.8" fill="none" stroke-linecap="round">
<path d="M3.400 3.800L1.700 2.500 1.400 .7M6.600 3.800l1.700-1.300 .3-1.800"/>
<path d="M3.200 5L.9 4.400.5 3M6.800 5l2.300-.6 .4-1.400"/>
<path d="M3.200 6.200L.9 6.800.5 8.400M6.800 6.200l2.300 .6 .4 1.600"/>
<path d="M3.600 7.400L2.100 8.600 1.900 9.700M6.400 7.400L7.900 8.600 8.100 9.700"/></g>
<ellipse cx="5" cy="6" rx="2.300" ry="2.800" fill="#5c5c5c"/><circle cx="5" cy="2.800" r="1.500" fill="#5c5c5c"/><ellipse cx="4.600" cy="5.500" rx="1" ry="1.500" fill="#ffffff" opacity=".35"/></svg>
<svg style="left:95px;top:333px" width="11" height="10" viewBox="0 0 11 10"><path d="M1 1v8.600" stroke="#c97f10" stroke-width="1.500" stroke-linecap="round"/>
<path d="M1.300 1.200q2.200-1.400 4.200 .2v.9q2.300-1.300 4.700-.3v5.200q-2.400-1-4.700 .4v-.9q-2-1.500-4.200-.2z" fill="#ffd83a" stroke="#d9a400" stroke-width=".8" stroke-linejoin="round"/>
<path d="M2.300 2.300q1.300-.8 2.500 0M6.400 3.300q1.400-.7 2.800-.3" stroke="#fff" stroke-opacity=".55" stroke-width=".8" fill="none"/></svg>
<svg style="left:110px;top:333px" width="10" height="10" viewBox="0 0 10 10"><g stroke="#5c5c5c" stroke-width="0.8" fill="none" stroke-linecap="round">
<path d="M3.400 3.800L1.700 2.500 1.400 .7M6.600 3.800l1.700-1.300 .3-1.800"/>
<path d="M3.200 5L.9 4.400.5 3M6.800 5l2.300-.6 .4-1.400"/>
<path d="M3.200 6.200L.9 6.800.5 8.400M6.800 6.200l2.300 .6 .4 1.600"/>
<path d="M3.600 7.400L2.100 8.600 1.900 9.700M6.400 7.400L7.900 8.600 8.100 9.700"/></g>
<ellipse cx="5" cy="6" rx="2.300" ry="2.800" fill="#5c5c5c"/><circle cx="5" cy="2.800" r="1.500" fill="#5c5c5c"/><ellipse cx="4.600" cy="5.500" rx="1" ry="1.500" fill="#ffffff" opacity=".35"/></svg>
<svg style="left:60px;top:375px" width="16" height="14" viewBox="0 0 16 14"><defs><linearGradient id="fc" x1="0" y1="0" x2="0" y2="1"><stop offset="0" stop-color="#faecc0"/><stop offset="1" stop-color="#efd088"/></linearGradient></defs>
<path d="M.5 2.500q0-1 1-1h4.700l1.300 1.500h7q1 0 1 1v8.200q0 1-1 1h-13q-1 0-1-1z" fill="url(#fc)" stroke="#d2ac60" stroke-width=".9"/>
<rect x="9.500" y="1.200" width="4.200" height="1.500" fill="#4fb2f0"/><rect x="8.500" y="2.500" width="6" height="1" fill="#fdfdfd"/>
<path d="M1.200 4.300h13.600" stroke="#fdf6dc" stroke-width="1"/><rect x="0" y="13.300" width="16" height="1" fill="#7a6a40" opacity=".25"/></svg>
<svg style="left:80px;top:377px" width="11" height="10" viewBox="0 0 11 10"><path d="M1 1v8.600" stroke="#c97f10" stroke-width="1.500" stroke-linecap="round"/>
<path d="M1.300 1.200q2.200-1.400 4.200 .2v.9q2.300-1.300 4.700-.3v5.200q-2.400-1-4.700 .4v-.9q-2-1.500-4.200-.2z" fill="#ffd83a" stroke="#d9a400" stroke-width=".8" stroke-linejoin="round"/>
<path d="M2.300 2.300q1.300-.8 2.500 0M6.400 3.300q1.400-.7 2.800-.3" stroke="#fff" stroke-opacity=".55" stroke-width=".8" fill="none"/></svg>
<svg style="left:94px;top:377px" width="10" height="10" viewBox="0 0 10 10"><g stroke="#5c5c5c" stroke-width="0.8" fill="none" stroke-linecap="round">
<path d="M3.400 3.800L1.700 2.500 1.400 .7M6.600 3.800l1.700-1.300 .3-1.800"/>
<path d="M3.200 5L.9 4.400.5 3M6.800 5l2.300-.6 .4-1.400"/>
<path d="M3.200 6.200L.9 6.800.5 8.400M6.800 6.200l2.300 .6 .4 1.600"/>
<path d="M3.600 7.400L2.100 8.600 1.900 9.700M6.400 7.400L7.900 8.600 8.100 9.700"/></g>
<ellipse cx="5" cy="6" rx="2.300" ry="2.800" fill="#5c5c5c"/><circle cx="5" cy="2.800" r="1.500" fill="#5c5c5c"/><ellipse cx="4.600" cy="5.500" rx="1" ry="1.500" fill="#ffffff" opacity=".35"/></svg>
<svg style="left:80px;top:399px" width="10" height="10" viewBox="0 0 10 10"><g stroke="#3a3a3a" stroke-width="0.8" fill="none" stroke-linecap="round">
<path d="M3.400 3.800L1.700 2.500 1.400 .7M6.600 3.800l1.700-1.300 .3-1.800"/>
<path d="M3.200 5L.9 4.400.5 3M6.800 5l2.300-.6 .4-1.400"/>
<path d="M3.200 6.200L.9 6.800.5 8.400M6.800 6.200l2.300 .6 .4 1.600"/>
<path d="M3.600 7.400L2.100 8.600 1.900 9.700M6.400 7.400L7.900 8.600 8.100 9.700"/></g>
<ellipse cx="5" cy="6" rx="2.300" ry="2.800" fill="#3a3a3a"/><circle cx="5" cy="2.800" r="1.500" fill="#3a3a3a"/><ellipse cx="4.600" cy="5.500" rx="1" ry="1.500" fill="#ffffff" opacity=".35"/></svg>
<svg style="left:80px;top:421px" width="10" height="10" viewBox="0 0 10 10"><g stroke="#5c5c5c" stroke-width="0.8" fill="none" stroke-linecap="round">
<path d="M3.400 3.800L1.700 2.500 1.400 .7M6.600 3.800l1.700-1.300 .3-1.800"/>
<path d="M3.200 5L.9 4.400.5 3M6.800 5l2.300-.6 .4-1.400"/>
<path d="M3.200 6.200L.9 6.800.5 8.400M6.800 6.200l2.300 .6 .4 1.600"/>
<path d="M3.600 7.400L2.100 8.600 1.900 9.700M6.400 7.400L7.900 8.600 8.100 9.700"/></g>
<ellipse cx="5" cy="6" rx="2.300" ry="2.800" fill="#5c5c5c"/><circle cx="5" cy="2.800" r="1.500" fill="#5c5c5c"/><ellipse cx="4.600" cy="5.500" rx="1" ry="1.500" fill="#ffffff" opacity=".35"/></svg>
<svg style="left:80px;top:443px" width="11" height="10" viewBox="0 0 11 10"><path d="M1 1v8.600" stroke="#c97f10" stroke-width="1.500" stroke-linecap="round"/>
<path d="M1.300 1.200q2.200-1.400 4.200 .2v.9q2.300-1.300 4.700-.3v5.200q-2.400-1-4.700 .4v-.9q-2-1.500-4.200-.2z" fill="#ffd83a" stroke="#d9a400" stroke-width=".8" stroke-linejoin="round"/>
<path d="M2.300 2.300q1.300-.8 2.500 0M6.400 3.300q1.400-.7 2.800-.3" stroke="#fff" stroke-opacity=".55" stroke-width=".8" fill="none"/></svg>
<svg style="left:94px;top:443px" width="10" height="10" viewBox="0 0 10 10"><g stroke="#5c5c5c" stroke-width="0.8" fill="none" stroke-linecap="round">
<path d="M3.400 3.800L1.700 2.500 1.400 .7M6.600 3.800l1.700-1.300 .3-1.800"/>
<path d="M3.200 5L.9 4.400.5 3M6.800 5l2.300-.6 .4-1.400"/>
<path d="M3.200 6.200L.9 6.800.5 8.400M6.800 6.200l2.300 .6 .4 1.600"/>
<path d="M3.600 7.400L2.100 8.600 1.900 9.700M6.400 7.400L7.900 8.600 8.100 9.700"/></g>
<ellipse cx="5" cy="6" rx="2.300" ry="2.800" fill="#5c5c5c"/><circle cx="5" cy="2.800" r="1.500" fill="#5c5c5c"/><ellipse cx="4.600" cy="5.500" rx="1" ry="1.500" fill="#ffffff" opacity=".35"/></svg>
<div class="strip" style="left:316px;top:75px;width:575px"></div>
<div class="tab" style="left:326px;width:105px"></div>
<div class="tab" style="left:430px;width:90px"></div>
<div class="tab sel" style="left:518px;width:96px"></div>
<div class="tab" style="left:613px;width:32px"></div>
<div class="t" style="left:354px;top:57px;letter-spacing:0.131px;">Quick Start</div>
<div class="t" style="left:458.5px;top:57px;letter-spacing:0.322px;">Request</div>
<div class="t" style="left:526px;top:57px;letter-spacing:0.458px;">Response</div>
<svg style="left:622px;top:57px" width="14" height="14" viewBox="0 0 14 14"><defs><linearGradient id="pg" x1="0" y1="0" x2="0" y2="1"><stop offset="0" stop-color="#63e060"/><stop offset="1" stop-color="#17a01f"/></linearGradient></defs>
<path d="M5.300 .5h3.400v4.800h4.800v3.400h-4.800v4.800h-3.400v-4.800h-4.800v-3.400h4.800z" fill="url(#pg)" stroke="#158a1c" stroke-width=".9" stroke-linejoin="round"/><ellipse cx="7" cy="14.300" rx="4" ry=".6" fill="#000" opacity=".15"/></svg>
<svg style="left:334.5px;top:56px" width="15" height="16" viewBox="0 0 15 16"><path d="M6.500 .5l-6 8.500h5l-3.500 6.500 11.500-10h-5.500l5-5z" fill="#ffd640" stroke="#d79a12" stroke-width=".9" stroke-linejoin="round"/></svg>
<svg style="left:439px;top:60px" width="14" height="10" viewBox="0 0 14 10"><path d="M.5 3.500h7.500v-3l5.500 4.500-5.500 4.500v-3h-7.500z" fill="#5fd052" stroke="#2d9a24" stroke-width=".9" stroke-linejoin="round"/></svg>
<svg style="left:588.7px;top:60px" width="14" height="10" viewBox="0 0 14 10"><path d="M13.500 3.500h-7.500v-3l-5.500 4.500 5.500 4.500v-3h7.500z" fill="#5fd052" stroke="#2d9a24" stroke-width=".9" stroke-linejoin="round"/></svg>
<div class="combo" style="left:324px;top:87px;width:108px;height:21px"><div class="arr"></div></div>
<div class="t" style="left:328.5px;top:90px;letter-spacing:0.283px;">Header: Text</div>
<div class="combo" style="left:441px;top:87px;width:93px;height:21px"><div class="arr"></div></div>
<div class="t" style="left:446.5px;top:90px;letter-spacing:0.195px;">Body: Text</div>
<div class="sepv" style="left:546px;top:87px;height:20px"></div>
<div class="sepv" style="left:604px;top:87px;height:20px"></div>
<div class="tb" style="left:553px;top:87px;width:20px;height:20px"></div>
<svg style="left:555.5px;top:90px" width="15" height="14" viewBox="0 0 15 14"><rect x=".5" y=".5" width="14" height="13" rx=".6" fill="#fff" stroke="#3f6fc4"/><rect x="2.200" y="2.200" width="10.600" height="9.600" fill="#b9d5f5" stroke="#94bbee" stroke-width=".8"/><path d="M2.200 7h10.600" stroke="#8db6ec" stroke-width="1.400"/><path d="M1 13.500h13.500v-12" stroke="#2d58a8" stroke-width=".8" fill="none" opacity=".6"/></svg>
<svg style="left:579.5px;top:90px" width="15" height="14" viewBox="0 0 15 14"><rect x=".5" y=".5" width="14" height="13" rx=".6" fill="#fff" stroke="#3f6fc4"/><rect x="2.200" y="2.200" width="10.600" height="9.600" fill="#b9d5f5" stroke="#94bbee" stroke-width=".8"/><path d="M1 13.500h13.500v-12" stroke="#2d58a8" stroke-width=".8" fill="none" opacity=".6"/></svg>
<div class="panel" style="left:319px;top:118px;width:571px;height:194px"></div>
<div class="a mono" style="left:322px;top:122px">HTTP/1.1 200 OK
Date: Sun, 03 May 2020 20:22:49 GMT
Server: Apache/2.4.29 (Ubuntu)
Vary: Accept-Encoding
Content-Length: 747
Keep-Alive: timeout=5, max=97
Connection: Keep-Alive
Content-Type: text/html; charset=UTF-8</div>
<div class="panel" style="left:319px;top:319px;width:571px;height:195px;overflow:hidden" id="bodyarea">
<div class="a mono" style="left:2px;top:-3px">            <i class="r">&lt;</i><i class="b">img</i> <i class="at">src</i><i class="op">=</i><i class="s">"images/youtube.png"</i> <i class="at">alt</i><i class="op">=</i><i class="s">"Youtube to MP3"</i> <i class="at">height</i><i class="op">=</i><i class="s">"200"</i>
<i class="at">width</i><i class="op">=</i><i class="s">"200"</i> <i class="r">/&gt;</i>
            <i class="r">&lt;</i><i class="b">img</i> <i class="at">src</i><i class="op">=</i><i class="s">"images/mp3-file.png"</i> <i class="at">alt</i><i class="op">=</i><i class="s">"Youtube to MP3"</i> <i class="at">height</i><i class="op">=</i><i class="s">"200"</i>
<i class="at">width</i><i class="op">=</i><i class="s">"200"</i> <i class="r">/&gt;</i>
         <i class="r">&lt;/</i><i class="b">div</i><i class="r">&gt;</i>
         <i class="r">&lt;</i><i class="b">h3</i><i class="r">&gt;</i>Convert My Video<i class="r">&lt;/</i><i class="b">h3</i><i class="r">&gt;</i>
         <i class="r">&lt;</i><i class="b">label</i> <i class="at">for</i><i class="op">=</i><i class="s">"ytid"</i><i class="r">&gt;</i>Video ID:<i class="r">&lt;/</i><i class="b">label</i><i class="r">&gt;</i><i class="r">&lt;</i><i class="b">input</i> <i class="at">type</i><i class="op">=</i><i class="s">"text"</i> <i class="at">id</i><i class="op">=</i><i class="s">"ytid"</i> <i class="at">name</i><i class="op">=</i>
<i class="s">"ytid"</i><i class="r">&gt;</i>
         <i class="r">&lt;</i><i class="b">button</i> <i class="at">type</i><i class="op">=</i><i class="s">"button"</i> <i class="at">id</i><i class="op">=</i><i class="s">"convert"</i><i class="r">&gt;</i>Convert!<i class="r">&lt;/</i><i class="b">button</i><i class="r">&gt;</i>
         <i class="r">&lt;</i><i class="b">span</i> <i class="at">id</i><i class="op">=</i><i class="s">"message"</i><i class="r">&gt;</i><i class="r">&lt;/</i><i class="b">span</i><i class="r">&gt;</i>
      <i class="r">&lt;/</i><i class="b">div</i><i class="r">&gt;</i>
   <i class="r">&lt;/</i><i class="b">body</i><i class="r">&gt;</i>
<i class="r">&lt;/</i><i class="b">html</i><i class="r">&gt;</i></div>
</div>
<div class="a" style="left:874px;top:320px;width:15px;height:193px;background:linear-gradient(90deg,#c9cbd0,#e9eaec 45%,#ededee 60%,#dfe0e3)"></div>
<div class="a" style="left:874px;top:337px;width:15px;height:159px;border-radius:0 14px 14px 0 / 0 9px 9px 0;background:linear-gradient(90deg,#8b8e95,#b4b7be 35%,#cfd1d7 75%,#c2c5cb)"></div>
<svg style="left:878px;top:325.5px" width="7" height="6.5" viewBox="0 0 7 6.5"><path d="M3.500 0L7 6.500H0z" fill="#3c3c3c"/></svg>
<svg style="left:878px;top:501.5px" width="7" height="6.5" viewBox="0 0 7 6.5"><path d="M0 0h7L3.500 6.500z" fill="#3c3c3c"/></svg>
<div class="a" style="left:874px;top:408px;width:15px;height:88px;box-sizing:border-box;border:1px solid #1f3350;border-left:none;border-radius:0 14px 14px 0 / 0 17px 17px 0;background:linear-gradient(90deg,#a9c2dc,#d4e4f4 45%,#dceaf7 60%,#b7cde4)"></div>
<div class="strip" style="left:3px;top:545px;width:888px"></div>
<div class="tab" style="left:13px;width:79px;top:523px"></div>
<div class="t" style="left:41.4px;top:527px;letter-spacing:0.044px;">History</div>
<div class="tab" style="left:91px;width:82px;top:523px"></div>
<div class="t" style="left:119.5px;top:527px;letter-spacing:0.329px;">Search</div>
<div class="tab" style="left:171px;width:74px;top:523px"></div>
<div class="t" style="left:199.3px;top:527px;letter-spacing:0.030px;">Alerts</div>
<div class="tab" style="left:243px;width:81px;top:523px"></div>
<div class="t" style="left:271px;top:527px;letter-spacing:0.219px;">Output</div>
<div class="tab" style="left:322px;width:78px;top:523px"></div>
<div class="t" style="left:350.6px;top:527px;letter-spacing:0.083px;">Spider</div>
<div class="tab" style="left:398px;width:108px;top:523px"></div>
<div class="t" style="left:425.7px;top:527px;letter-spacing:0.065px;">AJAX Spider</div>
<div class="tab" style="left:504px;width:109px;top:523px"></div>
<div class="t" style="left:531.8px;top:527px;letter-spacing:0.172px;">Active Scan</div>
<div class="tab sel" style="left:612px;width:159px;top:523px"></div>
<div class="t" style="left:640.3px;top:527px;letter-spacing:0.224px;">Forced Browse</div>
<div class="tab" style="left:770px;width:33px;top:523px"></div>
<svg style="left:778.7px;top:527px" width="14" height="14" viewBox="0 0 14 14"><defs><linearGradient id="pg" x1="0" y1="0" x2="0" y2="1"><stop offset="0" stop-color="#63e060"/><stop offset="1" stop-color="#17a01f"/></linearGradient></defs>
<path d="M5.300 .5h3.400v4.800h4.800v3.400h-4.800v4.800h-3.400v-4.800h-4.800v-3.400h4.800z" fill="url(#pg)" stroke="#158a1c" stroke-width=".9" stroke-linejoin="round"/><ellipse cx="7" cy="14.300" rx="4" ry=".6" fill="#000" opacity=".15"/></svg>
<svg style="left:21.5px;top:526px" width="15" height="15" viewBox="0 0 15 15"><rect x=".5" y="2" width="14" height="12.500" rx="1.200" fill="#fff" stroke="#8aa0b5"/><path d="M.5 3q0-1.500 1.500-1.500h11q1.500 0 1.500 1.500v2.500h-14z" fill="#e8462f" stroke="#b3301c" stroke-width=".8"/><rect x="3" y="0" width="1.800" height="3.500" rx=".8" fill="#c9d2dc" stroke="#7b8794" stroke-width=".5"/><rect x="10.200" y="0" width="1.800" height="3.500" rx=".8" fill="#c9d2dc" stroke="#7b8794" stroke-width=".5"/><g fill="#3fa89a"><rect x="2.500" y="7" width="2" height="1.600"/><rect x="5.300" y="7" width="2" height="1.600"/><rect x="8.100" y="7" width="2" height="1.600"/><rect x="10.900" y="7" width="2" height="1.600"/><rect x="2.500" y="9.400" width="2" height="1.600"/><rect x="5.300" y="9.400" width="2" height="1.600"/><rect x="8.100" y="9.400" width="2" height="1.600"/><rect x="10.900" y="9.400" width="2" height="1.600"/><rect x="2.500" y="11.800" width="2" height="1.600"/><rect x="5.300" y="11.800" width="2" height="1.600"/></g></svg>
<svg style="left:99px;top:526px" width="16" height="16" viewBox="0 0 16 16"><path d="M9 9l5.300 5.300" stroke="#2f64b0" stroke-width="3.200" stroke-linecap="round"/><path d="M9.300 9.300l4.800 4.800" stroke="#5c9ae8" stroke-width="1.600" stroke-linecap="round"/><circle cx="5.800" cy="5.800" r="4.800" fill="#dbeaf9" stroke="#8a9099" stroke-width="1.400"/><path d="M3 5q.8-2 3-2.200" stroke="#fff" stroke-width="1.200" fill="none"/></svg>
<svg style="left:179.5px;top:526px" width="16" height="16" viewBox="0 0 16 16"><path d="M2 1v14.500" stroke="#9a6a3a" stroke-width="1.800" stroke-linecap="round"/><path d="M3 2q3-2 6 0t6.500-.5v7.500q-3.500 1.800-6.500 0t-6 0z" fill="#f04a23" stroke="#c23310" stroke-width=".9" stroke-linejoin="round"/><path d="M3.500 3q2.800-1.600 5.500 0" stroke="#ff9a7a" stroke-width="1" fill="none"/></svg>
<svg style="left:253px;top:527px" width="12" height="15" viewBox="0 0 12 15"><path d="M.5 .5h7.500l3.500 3.500v10.500h-11z" fill="#fdfdfd" stroke="#9a9a9a"/><path d="M8 .5v3.500h3.500" fill="#eee" stroke="#9a9a9a"/><path d="M2.500 6h7M2.500 8h7M2.500 10h7M2.500 12h7" stroke="#b5b5b5" stroke-width=".9"/></svg>
<svg style="left:330px;top:526px" width="16" height="16" viewBox="0 0 10 10"><g stroke="#4a4a4a" stroke-width="0.8" fill="none" stroke-linecap="round">
<path d="M3.400 3.800L1.700 2.500 1.400 .7M6.600 3.800l1.700-1.300 .3-1.800"/>
<path d="M3.200 5L.9 4.400.5 3M6.800 5l2.300-.6 .4-1.400"/>
<path d="M3.200 6.200L.9 6.800.5 8.400M6.800 6.200l2.300 .6 .4 1.600"/>
<path d="M3.600 7.400L2.100 8.600 1.900 9.700M6.400 7.400L7.900 8.600 8.100 9.700"/></g>
<ellipse cx="5" cy="6" rx="2.300" ry="2.800" fill="#4a4a4a"/><circle cx="5" cy="2.800" r="1.500" fill="#4a4a4a"/><ellipse cx="4.600" cy="5.500" rx="1" ry="1.500" fill="#ffffff" opacity=".35"/></svg>
<svg style="left:406px;top:526px" width="16" height="16" viewBox="0 0 10 10"><g stroke="#e02a2a" stroke-width="0.8" fill="none" stroke-linecap="round">
<path d="M3.400 3.800L1.700 2.500 1.400 .7M6.600 3.800l1.700-1.300 .3-1.800"/>
<path d="M3.200 5L.9 4.400.5 3M6.800 5l2.300-.6 .4-1.400"/>
<path d="M3.200 6.200L.9 6.800.5 8.400M6.800 6.200l2.300 .6 .4 1.600"/>
<path d="M3.600 7.400L2.100 8.600 1.900 9.700M6.400 7.400L7.900 8.600 8.100 9.700"/></g>
<ellipse cx="5" cy="6" rx="2.300" ry="2.800" fill="#e02a2a"/><circle cx="5" cy="2.800" r="1.500" fill="#e02a2a"/><ellipse cx="4.600" cy="5.500" rx="1" ry="1.500" fill="#ffffff" opacity=".35"/></svg>
<svg style="left:515px;top:527px" width="9.2" height="13.6" viewBox="0 0 10 14"><defs><linearGradient id="fl" x1="0" y1="0" x2="0" y2="1"><stop offset="0" stop-color="#f0701a"/><stop offset=".6" stop-color="#f59a1c"/><stop offset="1" stop-color="#ffd43a"/></linearGradient></defs><path d="M4.500 0q1 2.500 3 4.500t2 4.500q0 4.500-4.700 4.500t-4.300-4.500q.3-2 1.800-3.200 0 1.800 1.200 2.200 .8-3.500 1-8z" fill="url(#fl)" stroke="#e0641a" stroke-width=".5"/><path d="M5 8q1.800 1.600 1.800 3.300t-1.800 1.900-2-1.700 2-3.500z" fill="#ffe98a"/></svg>
<svg style="left:620px;top:526px" width="16" height="16" viewBox="0 0 16 16"><defs><linearGradient id="hm" x1="0" y1="0" x2="1" y2="1"><stop offset="0" stop-color="#f4f4f6"/><stop offset="1" stop-color="#9d9da3"/></linearGradient></defs>
<ellipse cx="5" cy="15.500" rx="5" ry=".7" fill="#000" opacity=".13"/>
<path d="M1.700 14.300l8-8.200" stroke="#151515" stroke-width="2.700" stroke-linecap="round"/>
<path d="M1.900 13.500l7.200-7.400" stroke="#6e6e6e" stroke-width=".7" stroke-linecap="round"/>
<path d="M3.600 3.800q3.300-3.600 8.400-2.600l3.600 3.600q.6 .8-.1 1.400l-1.300 1.200q-.7 .4-1.200-.2l-.9-1-1.500 1.500-2.700-2.700 1-1.100q-2.400-1-5.300-.1z" fill="url(#hm)" stroke="#77777d" stroke-width=".7" stroke-linejoin="round"/></svg>
<svg style="left:738px;top:529px" width="10" height="10" viewBox="0 0 10 10"><path d="M5.500 .8l3.700 3.700-1.200 .4-1.800 1.800 .2 2-1.600-1.600-3.600 2.700 2.700-3.600-1.600-1.600 2 .2 1.800-1.800z" fill="#b9bcc3" stroke="#8c9098" stroke-width=".7"/></svg>
<svg style="left:754px;top:530px" width="8" height="8" viewBox="0 0 8 8"><path d="M1.200 1.200l5.600 5.600M6.800 1.200l-5.600 5.600" stroke="#9da1a9" stroke-width="2.200" stroke-linecap="round"/></svg>
<div class="t" style="left:5.7px;top:557px;letter-spacing:-0.017px;">Site:</div>
<div class="combo" style="left:35px;top:554px;width:145px;height:21px"><div class="arr"></div></div>
<div class="t" style="left:40.4px;top:557px;letter-spacing:-0.199px;font-weight:bold;">10.10.117.246:80</div>
<div class="t" style="left:182.8px;top:557px;letter-spacing:0.196px;">List:</div>
<div class="combo" style="left:209px;top:554px;width:150px;height:21px"><div class="arr"></div></div>
<div class="t" style="left:214.8px;top:557px;letter-spacing:-0.008px;">directory-list-1.0.txt</div>
<div class="t" style="left:501px;top:557px;letter-spacing:0.284px;">Current Scans:1| Num Requests:419158</div>
<div class="t" style="left:776.4px;top:557px;letter-spacing:-0.080px;">Export</div>
<div class="a" style="left:440px;top:557px;width:53px;height:15px;box-sizing:border-box;border:1px solid #9a9ea6;background:linear-gradient(#cfd2d8,#e4e6ea 30%,#eceef1)"></div>
<div class="a" style="left:440px;top:557px;width:16px;height:15px;box-sizing:border-box;border:1px solid #8a4a0c;background:linear-gradient(#f0a040,#e8811c 50%,#d96f10 51%,#f09a38)"></div>
<div class="t" style="left:454px;top:557px;letter-spacing:0.109px;">33%</div>
<svg style="left:368.5px;top:556.5px" width="10" height="14" viewBox="0 0 10 14"><path d="M.5 .5v13l9-6.500z" fill="#9c9c9c"/></svg>
<svg style="left:392px;top:558px" width="10" height="12" viewBox="0 0 10 12"><rect x=".5" y=".5" width="3" height="11" fill="#bcd8f7" stroke="#3f84de"/><rect x="6.500" y=".5" width="3" height="11" fill="#bcd8f7" stroke="#3f84de"/></svg>
<svg style="left:415px;top:558px" width="12" height="12" viewBox="0 0 12 12"><rect x=".5" y=".5" width="11" height="11" fill="#bfdaf8" stroke="#3f84de"/></svg>
<svg style="left:759px;top:557px" width="11" height="14" viewBox="0 0 11 14"><path d="M1.500 13.500q-1.500-7 4-9.500l-1.200-2.200 6.200 .7-2.200 5.500-1.200-2q-3.800 2-3 7.500z" fill="#4ecb42" stroke="#2a9a22" stroke-width=".8" stroke-linejoin="round"/></svg>
<svg style="left:870.8px;top:555.5px" width="16.5" height="16.5" viewBox="0 0 16 16"><path d="M15.61 6.85L15.61 9.15L13.49 9.52L12.96 10.81L14.20 12.57L12.57 14.20L10.81 12.96L9.52 13.49L9.15 15.61L6.85 15.61L6.48 13.49L5.19 12.96L3.43 14.20L1.80 12.57L3.04 10.81L2.51 9.52L0.39 9.15L0.39 6.85L2.51 6.48L3.04 5.19L1.80 3.43L3.43 1.80L5.19 3.04L6.48 2.51L6.85 0.39L9.15 0.39L9.52 2.51L10.81 3.04L12.57 1.80L14.20 3.43L12.96 5.19L13.49 6.48z" fill="#d4d4d4" stroke="#8f8f8f" stroke-width=".9" stroke-linejoin="round"/><circle cx="8" cy="8" r="2.800" fill="#d6d9df" stroke="#6f6f6f" stroke-width="1.100"/></svg>
<div class="a" style="left:5px;top:576px;width:886px;height:1px;background:#a9adb5"></div>
<div class="a" style="left:5px;top:581px;width:886px;height:326px;background:#fff;box-sizing:border-box;border:1px solid #8e929b;border-right:none"></div>
<div class="a" style="left:6px;top:582px;width:869px;height:20px;background:linear-gradient(#f4f5f7,#e6e8ec 50%,#d5d8de)"></div>
<div class="a" style="left:6px;top:602px;width:884px;height:1px;background:#9da1a9"></div>
<div class="a" style="left:875px;top:582px;width:15px;height:20px;background:#c6c9d0"></div>
<div class="a" style="left:125px;top:582px;width:1px;height:20px;background:#9da1a9"></div>
<div class="a" style="left:126px;top:582px;width:1px;height:20px;background:#f6f7f8"></div>
<div class="a" style="left:245px;top:582px;width:1px;height:20px;background:#9da1a9"></div>
<div class="a" style="left:246px;top:582px;width:1px;height:20px;background:#f6f7f8"></div>
<div class="a" style="left:297px;top:582px;width:1px;height:20px;background:#9da1a9"></div>
<div class="a" style="left:298px;top:582px;width:1px;height:20px;background:#f6f7f8"></div>
<div class="a" style="left:558px;top:582px;width:1px;height:20px;background:#9da1a9"></div>
<div class="a" style="left:559px;top:582px;width:1px;height:20px;background:#f6f7f8"></div>
<div class="a" style="left:597px;top:582px;width:1px;height:20px;background:#9da1a9"></div>
<div class="a" style="left:598px;top:582px;width:1px;height:20px;background:#f6f7f8"></div>
<div class="a" style="left:666px;top:582px;width:1px;height:20px;background:#9da1a9"></div>
<div class="a" style="left:667px;top:582px;width:1px;height:20px;background:#f6f7f8"></div>
<div class="a" style="left:777px;top:582px;width:1px;height:20px;background:#9da1a9"></div>
<div class="a" style="left:778px;top:582px;width:1px;height:20px;background:#f6f7f8"></div>
<div class="a" style="left:874px;top:582px;width:1px;height:20px;background:#9da1a9"></div>
<div class="a" style="left:875px;top:582px;width:1px;height:20px;background:#f6f7f8"></div>
<div class="t" style="left:11px;top:584px;letter-spacing:0.185px;">Req. Timestamp</div>
<div class="t" style="left:131px;top:584px;letter-spacing:0.223px;">Resp. Timestamp</div>
<div class="t" style="left:251px;top:584px;letter-spacing:0.020px;">Met...</div>
<div class="t" style="left:303px;top:584px;letter-spacing:0.065px;">URL</div>
<div class="t" style="left:564.3px;top:584px;letter-spacing:0.009px;">Co...</div>
<div class="t" style="left:603.5px;top:584px;letter-spacing:0.294px;">Reason</div>
<div class="t" style="left:672.8px;top:584px;letter-spacing:0.064px;">Size Resp. He...</div>
<div class="t" style="left:783.2px;top:584px;letter-spacing:0.080px;">Size Resp. B...</div>
<div class="t" style="left:11px;top:605px;letter-spacing:0.227px;">5/3/20 10:25:4...</div>
<div class="t" style="left:131px;top:605px;letter-spacing:0.227px;">5/3/20 10:25:4...</div>
<div class="t" style="left:251px;top:605px;letter-spacing:-0.070px;">GET</div>
<div class="t" style="left:303px;top:605px;letter-spacing:0.254px;">http://10.10.117.246:80/</div>
<div class="t" style="left:569.3px;top:605px;letter-spacing:0.366px;">200</div>
<div class="t" style="left:603.5px;top:605px;letter-spacing:-0.157px;">OK</div>
<div class="t" style="left:672.8px;top:605px;letter-spacing:0.247px;">172 bytes</div>
<div class="t" style="left:783.4px;top:605px;letter-spacing:0.247px;">747 bytes</div>
<div class="a" style="left:6px;top:621px;width:869px;height:18px;background:#f2f2f2"></div>
<div class="t" style="left:11px;top:623px;letter-spacing:0.227px;">5/3/20 10:25:4...</div>
<div class="t" style="left:131px;top:623px;letter-spacing:0.227px;">5/3/20 10:25:4...</div>
<div class="t" style="left:251px;top:623px;letter-spacing:-0.070px;">GET</div>
<div class="t" style="left:303px;top:623px;letter-spacing:0.239px;">http://10.10.117.246:80/images/</div>
<div class="t" style="left:569.3px;top:623px;letter-spacing:0.366px;">403</div>
<div class="t" style="left:603.5px;top:623px;letter-spacing:0.162px;">Forbidd...</div>
<div class="t" style="left:672.8px;top:623px;letter-spacing:0.247px;">161 bytes</div>
<div class="t" style="left:783.4px;top:623px;letter-spacing:0.247px;">278 bytes</div>
<div class="t" style="left:11px;top:641px;letter-spacing:0.227px;">5/3/20 10:25:5...</div>
<div class="t" style="left:131px;top:641px;letter-spacing:0.227px;">5/3/20 10:25:5...</div>
<div class="t" style="left:251px;top:641px;letter-spacing:-0.070px;">GET</div>
<div class="t" style="left:303px;top:641px;letter-spacing:0.239px;">http://10.10.117.246:80/js/</div>
<div class="t" style="left:569.3px;top:641px;letter-spacing:0.366px;">403</div>
<div class="t" style="left:603.5px;top:641px;letter-spacing:0.162px;">Forbidd...</div>
<div class="t" style="left:672.8px;top:641px;letter-spacing:0.247px;">161 bytes</div>
<div class="t" style="left:783.4px;top:641px;letter-spacing:0.247px;">278 bytes</div>
<div class="a" style="left:6px;top:657px;width:869px;height:18px;background:#f2f2f2"></div>
<div class="t" style="left:11px;top:659px;letter-spacing:0.227px;">5/3/20 10:25:5...</div>
<div class="t" style="left:131px;top:659px;letter-spacing:0.227px;">5/3/20 10:25:5...</div>
<div class="t" style="left:251px;top:659px;letter-spacing:-0.070px;">GET</div>
<div class="t" style="left:303px;top:659px;letter-spacing:0.196px;">http://10.10.117.246:80/js/jquery-3.5....</div>
<div class="t" style="left:569.3px;top:659px;letter-spacing:0.366px;">200</div>
<div class="t" style="left:603.5px;top:659px;letter-spacing:-0.157px;">OK</div>
<div class="t" style="left:672.8px;top:659px;letter-spacing:0.247px;">269 bytes</div>
<div class="t" style="left:783.4px;top:659px;letter-spacing:0.262px;">89,493 bytes</div>
<div class="t" style="left:11px;top:677px;letter-spacing:0.227px;">5/3/20 10:25:5...</div>
<div class="t" style="left:131px;top:677px;letter-spacing:0.227px;">5/3/20 10:25:5...</div>
<div class="t" style="left:251px;top:677px;letter-spacing:-0.070px;">GET</div>
<div class="t" style="left:303px;top:677px;letter-spacing:0.238px;">http://10.10.117.246:80/js/main.js</div>
<div class="t" style="left:569.3px;top:677px;letter-spacing:0.366px;">200</div>
<div class="t" style="left:603.5px;top:677px;letter-spacing:-0.157px;">OK</div>
<div class="t" style="left:672.8px;top:677px;letter-spacing:0.247px;">265 bytes</div>
<div class="t" style="left:783.4px;top:677px;letter-spacing:0.247px;">755 bytes</div>
<div class="a" style="left:6px;top:693px;width:869px;height:18px;background:#f2f2f2"></div>
<div class="t" style="left:11px;top:695px;letter-spacing:0.227px;">5/3/20 10:25:5...</div>
<div class="t" style="left:131px;top:695px;letter-spacing:0.227px;">5/3/20 10:25:5...</div>
<div class="t" style="left:251px;top:695px;letter-spacing:-0.070px;">GET</div>
<div class="t" style="left:303px;top:695px;letter-spacing:0.248px;">http://10.10.117.246:80/admin/</div>
<div class="t" style="left:569.3px;top:695px;letter-spacing:0.366px;">401</div>
<div class="t" style="left:603.5px;top:695px;letter-spacing:0.322px;">Unauth...</div>
<div class="t" style="left:672.8px;top:695px;letter-spacing:0.247px;">207 bytes</div>
<div class="t" style="left:783.4px;top:695px;letter-spacing:0.247px;">460 bytes</div>
<div class="t" style="left:11px;top:713px;letter-spacing:0.227px;">5/3/20 10:26:0...</div>
<div class="t" style="left:131px;top:713px;letter-spacing:0.227px;">5/3/20 10:26:0...</div>
<div class="t" style="left:251px;top:713px;letter-spacing:-0.070px;">GET</div>
<div class="t" style="left:303px;top:713px;letter-spacing:0.231px;">http://10.10.117.246:80//images/</div>
<div class="t" style="left:569.3px;top:713px;letter-spacing:0.366px;">403</div>
<div class="t" style="left:603.5px;top:713px;letter-spacing:0.162px;">Forbidd...</div>
<div class="t" style="left:672.8px;top:713px;letter-spacing:0.247px;">161 bytes</div>
<div class="t" style="left:783.4px;top:713px;letter-spacing:0.247px;">278 bytes</div>
<div class="a" style="left:6px;top:729px;width:869px;height:18px;background:#f2f2f2"></div>
<div class="t" style="left:11px;top:731px;letter-spacing:0.227px;">5/3/20 10:26:0...</div>
<div class="t" style="left:131px;top:731px;letter-spacing:0.227px;">5/3/20 10:26:0...</div>
<div class="t" style="left:251px;top:731px;letter-spacing:-0.070px;">GET</div>
<div class="t" style="left:303px;top:731px;letter-spacing:0.231px;">http://10.10.117.246:80/icons/</div>
<div class="t" style="left:569.3px;top:731px;letter-spacing:0.366px;">403</div>
<div class="t" style="left:603.5px;top:731px;letter-spacing:0.162px;">Forbidd...</div>
<div class="t" style="left:672.8px;top:731px;letter-spacing:0.247px;">161 bytes</div>
<div class="t" style="left:783.4px;top:731px;letter-spacing:0.247px;">278 bytes</div>
<div class="t" style="left:11px;top:749px;letter-spacing:0.227px;">5/3/20 10:27:0...</div>
<div class="t" style="left:131px;top:749px;letter-spacing:0.227px;">5/3/20 10:27:0...</div>
<div class="t" style="left:251px;top:749px;letter-spacing:-0.070px;">GET</div>
<div class="t" style="left:303px;top:749px;letter-spacing:0.239px;">http://10.10.117.246:80/js/</div>
<div class="t" style="left:569.3px;top:749px;letter-spacing:0.366px;">403</div>
<div class="t" style="left:603.5px;top:749px;letter-spacing:0.162px;">Forbidd...</div>
<div class="t" style="left:672.8px;top:749px;letter-spacing:0.247px;">161 bytes</div>
<div class="t" style="left:783.4px;top:749px;letter-spacing:0.247px;">278 bytes</div>
<div class="a" style="left:6px;top:765px;width:869px;height:18px;background:#f2f2f2"></div>
<div class="t" style="left:11px;top:767px;letter-spacing:0.227px;">5/3/20 10:27:2...</div>
<div class="t" style="left:131px;top:767px;letter-spacing:0.227px;">5/3/20 10:27:2...</div>
<div class="t" style="left:251px;top:767px;letter-spacing:-0.070px;">GET</div>
<div class="t" style="left:303px;top:767px;letter-spacing:0.251px;">http://10.10.117.246:80/tmp/</div>
<div class="t" style="left:569.3px;top:767px;letter-spacing:0.366px;">403</div>
<div class="t" style="left:603.5px;top:767px;letter-spacing:0.162px;">Forbidd...</div>
<div class="t" style="left:672.8px;top:767px;letter-spacing:0.247px;">161 bytes</div>
<div class="t" style="left:783.4px;top:767px;letter-spacing:0.247px;">278 bytes</div>
<div class="t" style="left:11px;top:785px;letter-spacing:0.227px;">5/3/20 10:29:0...</div>
<div class="t" style="left:131px;top:785px;letter-spacing:0.227px;">5/3/20 10:29:0...</div>
<div class="t" style="left:251px;top:785px;letter-spacing:-0.070px;">GET</div>
<div class="t" style="left:303px;top:785px;letter-spacing:0.239px;">http://10.10.117.246:80/images/</div>
<div class="t" style="left:569.3px;top:785px;letter-spacing:0.366px;">403</div>
<div class="t" style="left:603.5px;top:785px;letter-spacing:0.162px;">Forbidd...</div>
<div class="t" style="left:672.8px;top:785px;letter-spacing:0.247px;">161 bytes</div>
<div class="t" style="left:783.4px;top:785px;letter-spacing:0.247px;">278 bytes</div>
<div class="a" style="left:875px;top:603px;width:15px;height:303px;background:linear-gradient(90deg,#b9bcc3,#dcdee2 45%,#e9eaed)"></div>
<div class="a" style="left:875px;top:619px;width:15px;height:271px;border-radius:0 14px 14px 0 / 0 9px 9px 0;background:linear-gradient(90deg,#8d9097,#bfc2c9 40%,#d4d6dc 75%,#c2c5cc)"></div>
<svg style="left:879px;top:608.3px" width="7" height="6.5" viewBox="0 0 7 6.5"><path d="M3.500 0L7 6.500H0z" fill="#3c3c3c"/></svg>
<svg style="left:879px;top:895px" width="7" height="6.5" viewBox="0 0 7 6.5"><path d="M0 0h7L3.500 6.500z" fill="#3c3c3c"/></svg>
<svg style="left:877px;top:584px" width="11" height="17" viewBox="0 0 11 17"><rect x=".5" y=".5" width="10" height="16" rx="4.500" fill="#f4f4f4" stroke="#9a9ea6"/><path d="M2 3.500h7.500v4M2 3.500v7h3M2 5.500h7.500M5.500 3.500v3.500" stroke="#1a1a1a" stroke-width="1" fill="none"/><path d="M4.500 8.500h6.500l-3.250 3.500z" fill="#1a1a1a"/></svg>
<div class="a" style="left:3px;top:909px;width:888px;height:1px;background:#a4a8b0"></div>
<div class="a" style="left:3px;top:907px;width:888px;height:2px;background:#dfe1e6"></div>
<div class="t" style="left:14px;top:911px;letter-spacing:0.030px;">Alerts</div>
<div class="t" style="left:73.5px;top:911px;letter-spacing:0.12px;">0</div>
<div class="t" style="left:105px;top:911px;letter-spacing:0.12px;">1</div>
<div class="t" style="left:137px;top:911px;letter-spacing:0.12px;">1</div>
<div class="t" style="left:169px;top:911px;letter-spacing:0.12px;">1</div>
<div class="sepv" style="left:186px;top:912px;height:13px"></div>
<div class="t" style="left:192.3px;top:911px;letter-spacing:0.155px;">Primary Proxy: localhost:8081</div>
<div class="t" style="left:498.5px;top:911px;letter-spacing:0.284px;">Current Scans</div>
<div class="t" style="left:612px;top:911px;letter-spacing:0.12px;">0</div>
<div class="t" style="left:650px;top:911px;letter-spacing:0.12px;">0</div>
<div class="t" style="left:688px;top:911px;letter-spacing:0.12px;">0</div>
<div class="t" style="left:726.3px;top:911px;letter-spacing:0.12px;">0</div>
<div class="t" style="left:763.6px;top:911px;letter-spacing:0.12px;">0</div>
<div class="t" style="left:802px;top:911px;letter-spacing:0.12px;">0</div>
<div class="t" style="left:839.7px;top:911px;letter-spacing:0.12px;">1</div>
<div class="t" style="left:878.6px;top:911px;letter-spacing:0.12px;">0</div>
<svg style="left:59px;top:913px" width="11" height="10" viewBox="0 0 11 10"><path d="M1 1v8.600" stroke="#c03a12" stroke-width="1.500" stroke-linecap="round"/>
<path d="M1.300 1.200q2.200-1.400 4.200 .2v.9q2.300-1.300 4.700-.3v5.200q-2.400-1-4.700 .4v-.9q-2-1.500-4.200-.2z" fill="#f0542a" stroke="#c03a12" stroke-width=".8" stroke-linejoin="round"/>
<path d="M2.300 2.300q1.300-.8 2.500 0M6.400 3.300q1.400-.7 2.800-.3" stroke="#fff" stroke-opacity=".55" stroke-width=".8" fill="none"/></svg>
<svg style="left:91px;top:913px" width="11" height="10" viewBox="0 0 11 10"><path d="M1 1v8.600" stroke="#d97a05" stroke-width="1.500" stroke-linecap="round"/>
<path d="M1.300 1.200q2.200-1.400 4.200 .2v.9q2.300-1.300 4.700-.3v5.200q-2.400-1-4.700 .4v-.9q-2-1.500-4.200-.2z" fill="#f7a52a" stroke="#d97a05" stroke-width=".8" stroke-linejoin="round"/>
<path d="M2.300 2.300q1.300-.8 2.500 0M6.400 3.300q1.400-.7 2.800-.3" stroke="#fff" stroke-opacity=".55" stroke-width=".8" fill="none"/></svg>
<svg style="left:123px;top:913px" width="11" height="10" viewBox="0 0 11 10"><path d="M1 1v8.600" stroke="#c79a00" stroke-width="1.500" stroke-linecap="round"/>
<path d="M1.300 1.200q2.200-1.400 4.200 .2v.9q2.300-1.300 4.700-.3v5.200q-2.400-1-4.700 .4v-.9q-2-1.500-4.200-.2z" fill="#ffd735" stroke="#c79a00" stroke-width=".8" stroke-linejoin="round"/>
<path d="M2.300 2.300q1.300-.8 2.500 0M6.400 3.300q1.400-.7 2.800-.3" stroke="#fff" stroke-opacity=".55" stroke-width=".8" fill="none"/></svg>
<svg style="left:155px;top:913px" width="11" height="10" viewBox="0 0 11 10"><path d="M1 1v8.600" stroke="#2a62b0" stroke-width="1.500" stroke-linecap="round"/>
<path d="M1.300 1.200q2.200-1.400 4.200 .2v.9q2.300-1.300 4.700-.3v5.200q-2.400-1-4.700 .4v-.9q-2-1.500-4.200-.2z" fill="#4a90e2" stroke="#2a62b0" stroke-width=".8" stroke-linejoin="round"/>
<path d="M2.300 2.300q1.300-.8 2.500 0M6.400 3.300q1.400-.7 2.800-.3" stroke="#fff" stroke-opacity=".55" stroke-width=".8" fill="none"/></svg>
<svg style="left:591.3px;top:911px" width="16" height="16" viewBox="0 0 16 16"><defs><radialGradient id="bu" cx=".4" cy=".35" r=".7"><stop offset="0" stop-color="#ff9a5a"/><stop offset="1" stop-color="#e8501a"/></radialGradient></defs><path d="M16.00 8.00L14.38 9.71L14.93 12.00L12.67 12.67L12.00 14.93L9.71 14.38L8.00 16.00L6.29 14.38L4.00 14.93L3.33 12.67L1.07 12.00L1.62 9.71L0.00 8.00L1.62 6.29L1.07 4.00L3.33 3.33L4.00 1.07L6.29 1.62L8.00 0.00L9.71 1.62L12.00 1.07L12.67 3.33L14.93 4.00L14.38 6.29z" fill="url(#bu)"/></svg>
<svg style="left:630px;top:911px" width="16" height="15" viewBox="0 0 16 15"><path d="M4 .5h8v6h3.500l-7.500 8-7.500-8h3.500z" fill="#2f62c0" stroke="#1d4590" stroke-width=".8" stroke-linejoin="round"/><path d="M5 1.500h2.800v4.300h-2.800z" fill="#e8452c"/><path d="M8.200 1.500h2.800v4.300h-2.800z" fill="#5cc040"/><path d="M3 7h4.800v5z" fill="#3a8ae8"/><path d="M8.200 7h4.800l-4.800 5z" fill="#ffd23c"/><path d="M5 6.200h6v1h-6z" fill="#dfe8f8" opacity=".6"/></svg>
<svg style="left:667.5px;top:914px" width="17" height="11" viewBox="0 0 17 11"><path d="M.5 5.500q8-9 16 0-8 9-16 0z" fill="#f4f4f4" stroke="#5a5a5a" stroke-width="1"/><circle cx="8.500" cy="5.500" r="3" fill="#6a6a6a"/><circle cx="8.500" cy="5.500" r="1.300" fill="#1a1a1a"/></svg>
<svg style="left:709px;top:911px" width="9.2" height="13.6" viewBox="0 0 10 14"><defs><linearGradient id="fl" x1="0" y1="0" x2="0" y2="1"><stop offset="0" stop-color="#f0701a"/><stop offset=".6" stop-color="#f59a1c"/><stop offset="1" stop-color="#ffd43a"/></linearGradient></defs><path d="M4.500 0q1 2.500 3 4.500t2 4.500q0 4.500-4.700 4.500t-4.300-4.500q.3-2 1.800-3.200 0 1.800 1.200 2.200 .8-3.500 1-8z" fill="url(#fl)" stroke="#e0641a" stroke-width=".5"/><path d="M5 8q1.800 1.600 1.800 3.300t-1.800 1.900-2-1.700 2-3.500z" fill="#ffe98a"/></svg>
<svg style="left:745px;top:911.5px" width="15" height="15" viewBox="0 0 15 15"><circle cx="7.500" cy="7.500" r="6.300" fill="#fde0e0" stroke="#e03a3a" stroke-width="1.500"/><circle cx="7.500" cy="7.500" r="3.600" fill="#fde0e0" stroke="#e03a3a" stroke-width="1.500"/><circle cx="7.500" cy="7.500" r="1.500" fill="#e03a3a"/></svg>
<svg style="left:783px;top:911.5px" width="15.5" height="15.5" viewBox="0 0 10 10"><g stroke="#4a4a52" stroke-width="0.7" fill="none" stroke-linecap="round">
<path d="M3.400 3.800L1.700 2.500 1.400 .7M6.600 3.800l1.700-1.300 .3-1.800"/>
<path d="M3.200 5L.9 4.400.5 3M6.800 5l2.300-.6 .4-1.400"/>
<path d="M3.200 6.200L.9 6.800.5 8.400M6.800 6.200l2.300 .6 .4 1.600"/>
<path d="M3.600 7.400L2.100 8.600 1.900 9.700M6.400 7.400L7.900 8.600 8.100 9.700"/></g>
<ellipse cx="5" cy="6" rx="2.300" ry="2.800" fill="#4a4a52"/><circle cx="5" cy="2.800" r="1.500" fill="#4a4a52"/><ellipse cx="4.600" cy="5.500" rx="1" ry="1.500" fill="#c9c9e0" opacity=".35"/></svg>
<svg style="left:820px;top:911px" width="16" height="16" viewBox="0 0 16 16"><defs><linearGradient id="hm" x1="0" y1="0" x2="1" y2="1"><stop offset="0" stop-color="#f4f4f6"/><stop offset="1" stop-color="#9d9da3"/></linearGradient></defs>
<ellipse cx="5" cy="15.500" rx="5" ry=".7" fill="#000" opacity=".13"/>
<path d="M1.700 14.300l8-8.200" stroke="#151515" stroke-width="2.700" stroke-linecap="round"/>
<path d="M1.900 13.500l7.200-7.400" stroke="#6e6e6e" stroke-width=".7" stroke-linecap="round"/>
<path d="M3.600 3.800q3.300-3.600 8.400-2.600l3.600 3.600q.6 .8-.1 1.400l-1.300 1.200q-.7 .4-1.200-.2l-.9-1-1.500 1.500-2.700-2.700 1-1.100q-2.400-1-5.300-.1z" fill="url(#hm)" stroke="#77777d" stroke-width=".7" stroke-linejoin="round"/></svg>
<svg style="left:858.6px;top:911.5px" width="16" height="16" viewBox="0 0 10 10"><g stroke="#d82222" stroke-width="0.7" fill="none" stroke-linecap="round">
<path d="M3.400 3.800L1.700 2.500 1.400 .7M6.600 3.800l1.700-1.300 .3-1.800"/>
<path d="M3.200 5L.9 4.400.5 3M6.800 5l2.300-.6 .4-1.400"/>
<path d="M3.200 6.200L.9 6.800.5 8.400M6.800 6.200l2.300 .6 .4 1.600"/>
<path d="M3.600 7.400L2.100 8.600 1.900 9.700M6.400 7.400L7.900 8.600 8.100 9.700"/></g>
<ellipse cx="5" cy="6" rx="2.300" ry="2.800" fill="#d82222"/><circle cx="5" cy="2.800" r="1.500" fill="#d82222"/><ellipse cx="4.600" cy="5.500" rx="1" ry="1.500" fill="#ff9a9a" opacity=".35"/></svg>
<div class="a" style="left:313px;top:273px;width:3px;height:18px;box-sizing:border-box;border:1px solid #a7abb3;border-radius:2px"></div>
<div class="a" style="left:313px;top:291px;width:3px;height:1px;background:#f2f3f5"></div>
<div class="a" style="left:595px;top:314px;width:19px;height:3px;box-sizing:border-box;border:1px solid #a7abb3;border-bottom:none;border-radius:2px 2px 0 0"></div>
<div class="a" style="left:595px;top:316px;width:19px;height:1px;background:#eceef1"></div>
<div class="a" style="left:440px;top:517px;width:17px;height:3px;box-sizing:border-box;border:1px solid #a7abb3;border-bottom:none;border-radius:2px 2px 0 0"></div>
<div class="a" style="left:440px;top:519px;width:17px;height:1px;background:#eceef1"></div>
</div></body></html>
